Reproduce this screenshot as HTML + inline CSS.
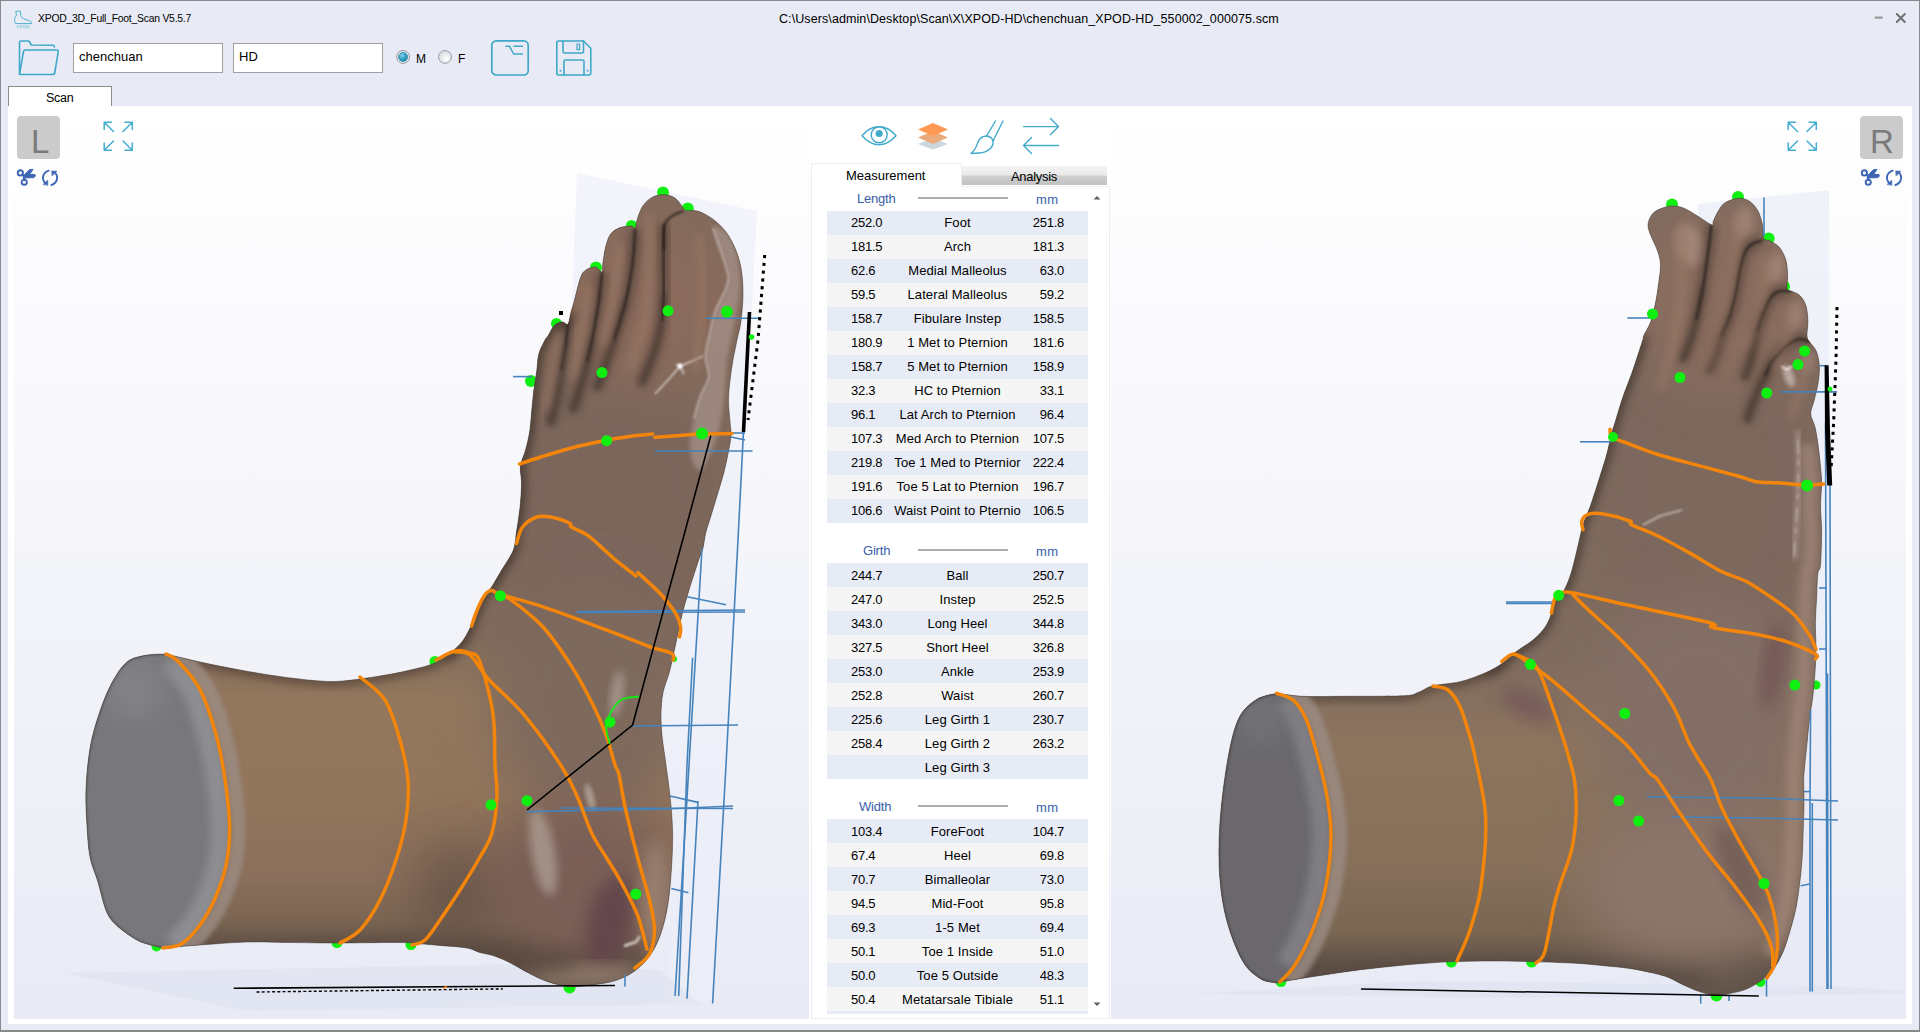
<!DOCTYPE html>
<html>
<head>
<meta charset="utf-8">
<title>XPOD_3D_Full_Foot_Scan</title>
<style>
*{box-sizing:border-box;margin:0;padding:0}
html,body{width:1920px;height:1032px;overflow:hidden;background:#e8ebf5;font-family:"Liberation Sans",sans-serif;color:#000}
#win{position:absolute;left:0;top:0;width:1920px;height:1032px;background:#e8ebf5;border-left:1px solid #8a8a8a;border-top:1px solid #8a8a8a;border-right:1px solid #8a8a8a;border-bottom:2px solid #8a8a8a}
.abs{position:absolute}
.t{position:absolute;white-space:nowrap;line-height:1}
#title{left:38px;top:14px;font-size:10.4px;letter-spacing:-0.24px}
#path{left:779px;top:13px;font-size:12.5px;letter-spacing:0.09px}
.inp{position:absolute;top:43px;height:30px;width:150px;background:#fff;border:1px solid #a0a0a0}
.inp span{position:absolute;left:5px;top:6px;font-size:13px;white-space:nowrap;line-height:1}
#tabscan{position:absolute;left:8px;top:86px;width:104px;height:21px;background:#fff;border:1px solid #8c8c8c;border-bottom:none}
#tabscan span{position:absolute;left:37px;top:5px;font-size:12.5px;line-height:1;letter-spacing:-0.3px}
#content{position:absolute;left:8px;top:106px;width:1904px;height:918px;background:#fff}
.vp{position:absolute;top:106px;height:913px;background:linear-gradient(180deg,#ffffff 0%,#fefeff 6%,#f4f5fa 50%,#e8ebf5 100%)}
#vpl{left:14px;width:795px}
#vpr{left:1111px;width:795px}
.lr{position:absolute;width:43px;height:43px;background:#cbcbcb;border-radius:4px;color:#7a7a7a;font-size:33px;line-height:1}
/* center panel */
#panel{position:absolute;left:811px;top:186px;width:299px;height:833px;border:1px solid #eceef3;background:#fff}
#tabm{position:absolute;left:811px;top:163px;width:151px;height:24px;background:#fff;border:1px solid #eceef3;border-bottom:none}
#taba{position:absolute;left:962px;top:166px;width:145px;height:19px;background:linear-gradient(180deg,#f4f4f4 0%,#eaeaea 45%,#cfcfcf 55%,#c2c2c2 100%)}
.row{position:absolute;left:827px;width:261px;height:24px;font-size:13px;line-height:26px;letter-spacing:-0.25px;overflow:hidden}
.row.a{background:#e7ebf6}
.row.b{background:#f5f5f5}
.row .l{position:absolute;left:24px;top:0;white-space:nowrap}
.row .c{position:absolute;left:0;width:261px;top:0;text-align:center;white-space:nowrap;letter-spacing:0.1px}
.row .r{position:absolute;right:24px;top:0;white-space:nowrap}
.hd{position:absolute;font-size:13px;line-height:1;color:#3a5ea8;white-space:nowrap;letter-spacing:-0.2px}
.hl{position:absolute;left:918px;width:90px;height:2px;background:#adadad}
</style>
</head>
<body>
<div id="win"></div>

<!-- title bar -->
<svg class="abs" style="left:12px;top:9px" width="22" height="22" viewBox="0 0 22 22" fill="none" stroke="#4ab0cf" stroke-width="1" stroke-linecap="round" stroke-linejoin="round">
<path d="M4.2 2.2 L8.4 2.2 L8.8 6.8 C10 9.5 13 10.5 16.5 11.5 C18.8 12.2 19.8 13.2 19.6 14.6 L3.6 14.6 C2.2 12 2 9 4.2 6.5 Z"/>
<path d="M4.5 16.5 L7 19 M7 16.5 L4.5 19 M8.5 19 L8.5 16.5 L10 16.5 L10 18 L8.5 18 M12 16.5 h2 v2.5 h-2 z M15.5 16.5 h1.5 v2.5 h-1.5 z" stroke-width="0.6" stroke="#7cc4dc"/>
</svg>
<div class="t" id="title">XPOD_3D_Full_Foot_Scan V5.5.7</div>
<div class="t" id="path">C:\Users\admin\Desktop\Scan\X\XPOD-HD\chenchuan_XPOD-HD_550002_000075.scm</div>
<svg class="abs" style="left:1868px;top:9px" width="44" height="20" viewBox="0 0 44 20" fill="none" stroke="#707070" stroke-width="2" stroke-linecap="round">
<path d="M7.6 8.6 L14 8.6" stroke="#9a9a9a" stroke-width="2.2"/>
<path d="M28.8 5 L36.8 13 M36.8 5 L28.8 13"/>
</svg>

<!-- toolbar -->
<svg class="abs" style="left:16px;top:38px" width="46" height="40" viewBox="0 0 46 40" fill="none" stroke="#3fa8c8" stroke-width="1.6" stroke-linejoin="round" stroke-linecap="round">
<path d="M3.5 36 L3.5 4.5 Q3.5 3 5 3 L12 3 Q13 3 13.6 4 L15.2 7 L37 7.3 Q38.3 7.4 38.5 9"/>
<path d="M3.5 36 L7.5 13.5 Q7.8 12 9.3 12 L40.5 12 Q42.5 12 42.2 14 L38.8 34.5 Q38.5 36.5 36.5 36.5 L5 36.5 Q3.6 36.5 3.5 36 Z"/>
</svg>
<div class="inp" style="left:73px"><span>chenchuan</span></div>
<div class="inp" style="left:233px"><span>HD</span></div>
<svg class="abs" style="left:394px;top:48px" width="64" height="18" viewBox="0 0 64 18">
<defs>
<radialGradient id="rgm" cx="0.4" cy="0.35" r="0.7"><stop offset="0" stop-color="#8fd4ea"/><stop offset="0.5" stop-color="#35a3c8"/><stop offset="1" stop-color="#1d7fa6"/></radialGradient>
<radialGradient id="rgf" cx="0.6" cy="0.65" r="0.7"><stop offset="0" stop-color="#ffffff"/><stop offset="1" stop-color="#d4d7dc"/></radialGradient>
</defs>
<circle cx="9.1" cy="8.9" r="6.4" fill="#f4f5f8" stroke="#7d8288" stroke-width="0.9"/>
<circle cx="9.1" cy="8.9" r="4.6" fill="url(#rgm)" stroke="#2a7d9e" stroke-width="0.6"/>
<circle cx="51" cy="8.9" r="6.4" fill="url(#rgf)" stroke="#8d9298" stroke-width="0.9"/>
</svg>
<div class="t" style="left:416px;top:53px;font-size:12px">M</div>
<div class="t" style="left:458px;top:53px;font-size:12px">F</div>
<svg class="abs" style="left:489px;top:38px" width="42" height="40" viewBox="0 0 42 40" fill="none" stroke="#3fa8c8" stroke-width="1.7" stroke-linecap="round" stroke-linejoin="round">
<rect x="2.8" y="2.8" width="36.4" height="34.2" rx="4.5"/>
<path d="M17 8.2 L20.5 8.2 L24.6 16 L33.5 16 M25 8.2 L33.5 8.2" stroke-width="1.5"/>
</svg>
<svg class="abs" style="left:554px;top:38px" width="42" height="40" viewBox="0 0 42 40" fill="none" stroke="#3fa8c8" stroke-width="1.6" stroke-linejoin="round" stroke-linecap="round">
<path d="M4.5 3 L29.5 3 L36.8 10.3 L36.8 35 Q36.8 37 34.8 37 L4.5 37 Q2.8 37 2.8 35 L2.8 4.7 Q2.8 3 4.5 3 Z"/>
<path d="M9 3 L9 13.5 Q9 15 10.5 15 L28 15 Q29.5 15 29.5 13.5 L29.5 3"/>
<rect x="23" y="6" width="2.6" height="5.6" stroke-width="1.2"/>
<path d="M10 37 L10 23.5 Q10 22 11.5 22 L28.5 22 Q30 22 30 23.5 L30 37"/>
<circle cx="6.3" cy="32.8" r="0.5" stroke-width="1"/><circle cx="33.5" cy="32.8" r="0.5" stroke-width="1"/>
</svg>
<div id="tabscan"><span>Scan</span></div>

<!-- content -->
<div id="content"></div>
<div class="vp" id="vpl"></div>
<div class="vp" id="vpr"></div>

<svg class="abs" style="left:0;top:0" width="1920" height="1032" viewBox="0 0 1920 1032">
<defs>
<clipPath id="cvl"><rect x="14" y="106" width="795" height="913"/></clipPath>
<clipPath id="cvr"><rect x="1111" y="106" width="795" height="913"/></clipPath>
<filter id="b2" x="-20%" y="-20%" width="140%" height="140%"><feGaussianBlur stdDeviation="2"/></filter>
<filter id="b1" x="-20%" y="-20%" width="140%" height="140%"><feGaussianBlur stdDeviation="1"/></filter>
<filter id="b4" x="-30%" y="-30%" width="160%" height="160%"><feGaussianBlur stdDeviation="4"/></filter>
<filter id="b8" x="-30%" y="-30%" width="160%" height="160%"><feGaussianBlur stdDeviation="8"/></filter>
<filter id="b14" x="-40%" y="-40%" width="180%" height="180%"><feGaussianBlur stdDeviation="14"/></filter>
<filter id="b25" x="-50%" y="-50%" width="200%" height="200%"><feGaussianBlur stdDeviation="25"/></filter>
</defs>
<clipPath id="cfl"><path d="M166.0 654.0 C171.7 655.3 187.7 659.3 200.0 662.0 C212.3 664.7 226.2 667.5 240.0 670.0 C253.8 672.5 269.7 675.2 283.0 677.0 C296.3 678.8 310.0 680.3 320.0 681.0 C330.0 681.7 333.0 681.8 343.0 681.0 C353.0 680.2 369.5 677.7 380.0 676.0 C390.5 674.3 397.6 672.9 406.0 671.0 C414.4 669.1 424.1 667.0 430.6 664.7 C437.1 662.4 440.9 659.6 445.0 657.0 C449.1 654.4 451.9 651.9 455.0 649.0 C458.1 646.1 460.9 643.5 463.7 639.4 C466.5 635.3 468.7 631.0 471.6 624.6 C474.5 618.2 478.5 606.4 481.0 601.0 C483.5 595.6 484.6 594.6 486.4 592.3 C488.2 590.0 489.0 590.8 491.6 587.0 C494.2 583.2 498.5 575.4 502.0 569.6 C505.5 563.8 510.3 556.9 512.6 552.0 C514.9 547.1 515.0 542.8 515.6 540.0 C516.2 537.2 515.5 538.5 516.0 535.0 C516.5 531.5 517.8 524.4 518.5 519.0 C519.2 513.6 520.0 508.9 520.5 502.8 C521.0 496.7 521.5 488.6 521.5 482.5 C521.5 476.4 519.8 471.4 520.5 466.0 C521.2 460.6 524.1 455.7 525.6 450.0 C527.1 444.3 528.7 438.1 529.7 431.6 C530.7 425.1 531.0 417.8 531.7 411.0 C532.4 404.2 532.9 397.8 533.7 391.0 C534.6 384.2 535.9 376.7 536.8 370.5 C537.6 364.3 537.4 359.1 538.8 354.0 C540.2 348.9 543.5 343.0 545.0 340.0 C546.5 337.0 546.7 338.2 548.0 336.0 C549.3 333.8 551.4 329.2 553.0 327.0 C554.6 324.8 556.1 323.8 557.8 323.0 C559.5 322.2 561.3 321.8 563.0 322.0 C564.7 322.2 566.7 325.7 568.0 324.0 C569.3 322.3 570.0 315.7 571.0 312.0 C572.0 308.3 572.4 307.7 574.0 302.0 C575.6 296.3 578.5 283.0 580.5 277.7 C582.5 272.4 583.5 271.8 586.0 270.0 C588.5 268.2 592.9 266.7 595.6 267.0 C598.3 267.3 600.8 272.8 602.0 272.0 C603.2 271.2 602.3 266.4 603.0 262.0 C603.7 257.6 604.7 250.3 606.0 245.6 C607.3 240.9 608.4 237.0 610.7 234.0 C613.0 231.0 616.5 228.9 620.0 227.6 C623.5 226.3 629.0 225.8 631.5 226.0 C634.0 226.2 634.2 229.3 635.0 228.6 C635.8 227.9 636.0 223.9 636.5 222.0 C637.0 220.1 637.0 219.7 638.0 217.0 C639.0 214.3 640.5 209.3 642.8 206.0 C645.1 202.7 648.5 199.3 652.0 197.4 C655.5 195.5 659.8 194.5 663.6 194.6 C667.4 194.7 671.9 196.0 675.0 198.0 C678.1 200.0 680.7 204.7 682.5 206.8 C684.3 208.9 683.5 209.8 686.0 210.5 C688.5 211.2 693.1 209.6 697.6 211.0 C702.1 212.4 708.0 215.5 712.7 219.0 C717.4 222.5 722.2 227.0 726.0 232.0 C729.8 237.0 732.9 243.0 735.4 249.0 C737.9 255.0 739.7 260.7 741.0 268.0 C742.3 275.3 743.0 284.0 743.0 292.8 C743.0 301.6 742.0 313.1 741.0 321.0 C740.0 328.9 738.3 333.5 737.0 340.0 C735.7 346.5 734.2 353.2 733.0 360.0 C731.8 366.8 730.8 373.9 730.0 380.7 C729.2 387.5 728.5 394.2 728.5 401.0 C728.5 407.8 729.6 415.6 730.0 421.4 C730.4 427.2 731.3 430.2 731.0 435.6 C730.7 441.0 729.2 447.9 728.0 454.0 C726.8 460.1 725.7 465.6 724.0 472.0 C722.3 478.4 720.0 485.8 718.0 492.6 C716.0 499.4 713.8 506.3 711.8 513.0 C709.8 519.7 707.2 527.2 705.7 533.0 C704.2 538.8 704.3 543.2 703.0 548.0 C701.7 552.8 700.3 555.0 698.0 562.0 C695.7 569.0 691.7 581.0 689.0 590.0 C686.3 599.0 683.9 607.2 681.7 616.0 C679.5 624.8 678.0 633.4 676.0 642.5 C674.0 651.6 671.9 662.4 669.7 670.8 C667.5 679.1 664.5 685.4 663.0 692.6 C661.5 699.8 661.2 706.8 661.0 714.0 C660.8 721.2 661.3 728.7 662.0 736.0 C662.7 743.3 663.7 748.0 665.0 758.0 C666.3 768.0 668.7 783.5 670.0 796.0 C671.3 808.5 672.4 820.5 672.6 832.7 C672.8 844.9 672.2 857.0 671.4 869.0 C670.6 881.0 669.6 894.1 667.8 905.0 C666.0 915.9 663.5 926.0 660.5 934.5 C657.5 943.0 653.9 950.0 649.6 956.0 C645.4 962.0 640.6 966.7 635.0 970.8 C629.4 974.9 623.0 978.1 615.7 980.5 C608.5 982.9 599.2 984.0 591.5 985.0 C583.8 986.0 576.9 987.0 569.6 986.5 C562.3 986.0 554.6 984.0 547.8 981.7 C540.9 979.5 534.5 976.0 528.5 973.0 C522.5 970.0 517.2 966.3 511.5 963.5 C505.8 960.7 499.8 957.8 494.5 956.0 C489.2 954.2 484.6 953.9 480.0 952.6 C475.4 951.3 473.7 949.2 467.0 948.0 C460.3 946.8 447.5 946.2 440.0 945.5 C432.5 944.8 428.7 944.5 422.0 944.0 C415.3 943.5 414.0 942.7 400.0 942.5 C386.0 942.3 356.3 943.0 338.0 943.0 C319.7 943.0 305.2 942.7 290.0 942.5 C274.8 942.3 262.0 941.6 247.0 942.0 C232.0 942.4 214.0 944.0 200.0 945.0 C186.0 946.0 169.2 947.5 163.0 948.0 C160.9 947.5 154.8 946.2 150.6 945.0 C146.4 943.8 143.2 943.4 138.0 940.6 C132.8 937.8 124.8 932.6 119.6 928.0 C114.4 923.4 110.6 920.4 107.0 912.7 C103.4 905.0 100.7 891.0 97.9 881.7 C95.1 872.4 91.8 866.3 90.0 857.0 C88.2 847.7 87.7 837.4 87.0 826.0 C86.3 814.6 85.5 801.6 86.0 788.7 C86.5 775.8 88.0 760.4 90.0 748.5 C92.0 736.6 94.6 727.8 97.9 717.5 C101.2 707.2 105.3 695.6 110.0 686.5 C114.7 677.4 120.1 668.2 125.8 663.0 C131.5 657.8 137.7 657.0 144.4 655.5 C151.1 654.0 162.4 654.2 166.0 654.0 Z"/></clipPath>
<clipPath id="ccl"><path d="M166.0 654.0 C168.1 655.3 172.8 655.8 178.5 661.7 C184.2 667.6 193.8 677.7 200.0 689.6 C206.2 701.5 211.4 718.0 215.6 733.0 C219.8 748.0 222.7 764.0 225.0 779.5 C227.3 795.0 229.3 812.1 229.6 826.0 C229.8 839.9 228.8 851.2 226.5 863.0 C224.2 874.8 220.0 886.7 215.6 897.0 C211.2 907.3 205.7 917.2 200.0 925.0 C194.3 932.8 187.8 939.9 181.6 943.7 C175.4 947.5 166.1 947.3 163.0 948.0 C160.9 947.5 154.8 946.2 150.6 945.0 C146.4 943.8 143.2 943.4 138.0 940.6 C132.8 937.8 124.8 932.6 119.6 928.0 C114.4 923.4 110.6 920.4 107.0 912.7 C103.4 905.0 100.7 891.0 97.9 881.7 C95.1 872.4 91.8 866.3 90.0 857.0 C88.2 847.7 87.7 837.4 87.0 826.0 C86.3 814.6 85.5 801.6 86.0 788.7 C86.5 775.8 88.0 760.4 90.0 748.5 C92.0 736.6 94.6 727.8 97.9 717.5 C101.2 707.2 105.3 695.6 110.0 686.5 C114.7 677.4 120.1 668.2 125.8 663.0 C131.5 657.8 137.7 657.0 144.4 655.5 C151.1 654.0 162.4 654.2 166.0 654.0 Z"/></clipPath>
<linearGradient id="gLbase" gradientUnits="userSpaceOnUse" x1="0" y1="640" x2="0" y2="990">
<stop offset="0" stop-color="#806a5b"/><stop offset="0.17" stop-color="#93775d"/><stop offset="0.45" stop-color="#92755b"/><stop offset="0.68" stop-color="#8a6f5b"/><stop offset="0.8" stop-color="#7b6552"/><stop offset="0.88" stop-color="#5f5045"/><stop offset="1" stop-color="#5f5045"/></linearGradient>
<g clip-path="url(#cvl)">
<path d="M577 173 L757 211 L745 431 L738 540 L726 765 L713 1003 L670 1003 L640 420 L571 330 Z" fill="#eceef9" opacity="0.6"/>
<path d="M64 973 L520 964 L660 970 L700 1004 L246 1011 Z" fill="#dde1ef" opacity="0.55"/>
<circle cx="663" cy="192.5" r="6" fill="#10f010"/>
<circle cx="687.8" cy="208.5" r="6" fill="#10f010"/>
<circle cx="631.5" cy="225.5" r="5.5" fill="#10f010"/>
<circle cx="596" cy="267.5" r="6" fill="#10f010"/>
<circle cx="556.5" cy="323.5" r="5.5" fill="#10f010"/>
<circle cx="531" cy="381" r="6" fill="#10f010"/>
<circle cx="435" cy="661.5" r="5.5" fill="#10f010"/>
<circle cx="569.6" cy="987.5" r="6" fill="#10f010"/>
<circle cx="156.5" cy="946.5" r="5" fill="#10f010"/>
<circle cx="337" cy="942.5" r="5.5" fill="#10f010"/>
<circle cx="411" cy="944.5" r="5.5" fill="#10f010"/>
<circle cx="674" cy="659" r="3" fill="#10f010"/>
<path d="M166.0 654.0 C171.7 655.3 187.7 659.3 200.0 662.0 C212.3 664.7 226.2 667.5 240.0 670.0 C253.8 672.5 269.7 675.2 283.0 677.0 C296.3 678.8 310.0 680.3 320.0 681.0 C330.0 681.7 333.0 681.8 343.0 681.0 C353.0 680.2 369.5 677.7 380.0 676.0 C390.5 674.3 397.6 672.9 406.0 671.0 C414.4 669.1 424.1 667.0 430.6 664.7 C437.1 662.4 440.9 659.6 445.0 657.0 C449.1 654.4 451.9 651.9 455.0 649.0 C458.1 646.1 460.9 643.5 463.7 639.4 C466.5 635.3 468.7 631.0 471.6 624.6 C474.5 618.2 478.5 606.4 481.0 601.0 C483.5 595.6 484.6 594.6 486.4 592.3 C488.2 590.0 489.0 590.8 491.6 587.0 C494.2 583.2 498.5 575.4 502.0 569.6 C505.5 563.8 510.3 556.9 512.6 552.0 C514.9 547.1 515.0 542.8 515.6 540.0 C516.2 537.2 515.5 538.5 516.0 535.0 C516.5 531.5 517.8 524.4 518.5 519.0 C519.2 513.6 520.0 508.9 520.5 502.8 C521.0 496.7 521.5 488.6 521.5 482.5 C521.5 476.4 519.8 471.4 520.5 466.0 C521.2 460.6 524.1 455.7 525.6 450.0 C527.1 444.3 528.7 438.1 529.7 431.6 C530.7 425.1 531.0 417.8 531.7 411.0 C532.4 404.2 532.9 397.8 533.7 391.0 C534.6 384.2 535.9 376.7 536.8 370.5 C537.6 364.3 537.4 359.1 538.8 354.0 C540.2 348.9 543.5 343.0 545.0 340.0 C546.5 337.0 546.7 338.2 548.0 336.0 C549.3 333.8 551.4 329.2 553.0 327.0 C554.6 324.8 556.1 323.8 557.8 323.0 C559.5 322.2 561.3 321.8 563.0 322.0 C564.7 322.2 566.7 325.7 568.0 324.0 C569.3 322.3 570.0 315.7 571.0 312.0 C572.0 308.3 572.4 307.7 574.0 302.0 C575.6 296.3 578.5 283.0 580.5 277.7 C582.5 272.4 583.5 271.8 586.0 270.0 C588.5 268.2 592.9 266.7 595.6 267.0 C598.3 267.3 600.8 272.8 602.0 272.0 C603.2 271.2 602.3 266.4 603.0 262.0 C603.7 257.6 604.7 250.3 606.0 245.6 C607.3 240.9 608.4 237.0 610.7 234.0 C613.0 231.0 616.5 228.9 620.0 227.6 C623.5 226.3 629.0 225.8 631.5 226.0 C634.0 226.2 634.2 229.3 635.0 228.6 C635.8 227.9 636.0 223.9 636.5 222.0 C637.0 220.1 637.0 219.7 638.0 217.0 C639.0 214.3 640.5 209.3 642.8 206.0 C645.1 202.7 648.5 199.3 652.0 197.4 C655.5 195.5 659.8 194.5 663.6 194.6 C667.4 194.7 671.9 196.0 675.0 198.0 C678.1 200.0 680.7 204.7 682.5 206.8 C684.3 208.9 683.5 209.8 686.0 210.5 C688.5 211.2 693.1 209.6 697.6 211.0 C702.1 212.4 708.0 215.5 712.7 219.0 C717.4 222.5 722.2 227.0 726.0 232.0 C729.8 237.0 732.9 243.0 735.4 249.0 C737.9 255.0 739.7 260.7 741.0 268.0 C742.3 275.3 743.0 284.0 743.0 292.8 C743.0 301.6 742.0 313.1 741.0 321.0 C740.0 328.9 738.3 333.5 737.0 340.0 C735.7 346.5 734.2 353.2 733.0 360.0 C731.8 366.8 730.8 373.9 730.0 380.7 C729.2 387.5 728.5 394.2 728.5 401.0 C728.5 407.8 729.6 415.6 730.0 421.4 C730.4 427.2 731.3 430.2 731.0 435.6 C730.7 441.0 729.2 447.9 728.0 454.0 C726.8 460.1 725.7 465.6 724.0 472.0 C722.3 478.4 720.0 485.8 718.0 492.6 C716.0 499.4 713.8 506.3 711.8 513.0 C709.8 519.7 707.2 527.2 705.7 533.0 C704.2 538.8 704.3 543.2 703.0 548.0 C701.7 552.8 700.3 555.0 698.0 562.0 C695.7 569.0 691.7 581.0 689.0 590.0 C686.3 599.0 683.9 607.2 681.7 616.0 C679.5 624.8 678.0 633.4 676.0 642.5 C674.0 651.6 671.9 662.4 669.7 670.8 C667.5 679.1 664.5 685.4 663.0 692.6 C661.5 699.8 661.2 706.8 661.0 714.0 C660.8 721.2 661.3 728.7 662.0 736.0 C662.7 743.3 663.7 748.0 665.0 758.0 C666.3 768.0 668.7 783.5 670.0 796.0 C671.3 808.5 672.4 820.5 672.6 832.7 C672.8 844.9 672.2 857.0 671.4 869.0 C670.6 881.0 669.6 894.1 667.8 905.0 C666.0 915.9 663.5 926.0 660.5 934.5 C657.5 943.0 653.9 950.0 649.6 956.0 C645.4 962.0 640.6 966.7 635.0 970.8 C629.4 974.9 623.0 978.1 615.7 980.5 C608.5 982.9 599.2 984.0 591.5 985.0 C583.8 986.0 576.9 987.0 569.6 986.5 C562.3 986.0 554.6 984.0 547.8 981.7 C540.9 979.5 534.5 976.0 528.5 973.0 C522.5 970.0 517.2 966.3 511.5 963.5 C505.8 960.7 499.8 957.8 494.5 956.0 C489.2 954.2 484.6 953.9 480.0 952.6 C475.4 951.3 473.7 949.2 467.0 948.0 C460.3 946.8 447.5 946.2 440.0 945.5 C432.5 944.8 428.7 944.5 422.0 944.0 C415.3 943.5 414.0 942.7 400.0 942.5 C386.0 942.3 356.3 943.0 338.0 943.0 C319.7 943.0 305.2 942.7 290.0 942.5 C274.8 942.3 262.0 941.6 247.0 942.0 C232.0 942.4 214.0 944.0 200.0 945.0 C186.0 946.0 169.2 947.5 163.0 948.0 C160.9 947.5 154.8 946.2 150.6 945.0 C146.4 943.8 143.2 943.4 138.0 940.6 C132.8 937.8 124.8 932.6 119.6 928.0 C114.4 923.4 110.6 920.4 107.0 912.7 C103.4 905.0 100.7 891.0 97.9 881.7 C95.1 872.4 91.8 866.3 90.0 857.0 C88.2 847.7 87.7 837.4 87.0 826.0 C86.3 814.6 85.5 801.6 86.0 788.7 C86.5 775.8 88.0 760.4 90.0 748.5 C92.0 736.6 94.6 727.8 97.9 717.5 C101.2 707.2 105.3 695.6 110.0 686.5 C114.7 677.4 120.1 668.2 125.8 663.0 C131.5 657.8 137.7 657.0 144.4 655.5 C151.1 654.0 162.4 654.2 166.0 654.0 Z" fill="url(#gLbase)"/>
<g clip-path="url(#cfl)">
<ellipse cx="610" cy="520" rx="120" ry="160" fill="#7b665b" filter="url(#b25)"/>
<ellipse cx="590" cy="700" rx="100" ry="120" fill="#7e695d" filter="url(#b25)"/>
<ellipse cx="640" cy="300" rx="95" ry="85" fill="#8a6b5b" filter="url(#b25)"/>
<ellipse cx="580" cy="880" rx="90" ry="80" fill="#7a5f56" filter="url(#b25)"/>
<ellipse cx="610" cy="922" rx="22" ry="46" transform="rotate(12 610 922)" fill="#62454b" filter="url(#b8)" opacity="0.9"/>
<ellipse cx="543" cy="852" rx="12" ry="44" transform="rotate(-10 543 852)" fill="#ab9b91" filter="url(#b4)" opacity="0.8"/>
<ellipse cx="590" cy="797" rx="4" ry="14" transform="rotate(-15 590 797)" fill="#b5a79e" filter="url(#b2)" opacity="0.8"/>
<path d="M624 946 L636 942 L640 936" fill="none" stroke="#d8ccc6" stroke-width="3" filter="url(#b1)" opacity="0.9"/>
<ellipse cx="655" cy="900" rx="14" ry="60" fill="#9c8271" filter="url(#b8)" opacity="0.9"/>
<ellipse cx="585" cy="975" rx="60" ry="10" fill="#9a8474" filter="url(#b8)" opacity="0.8"/>
<ellipse cx="380" cy="962" rx="200" ry="18" fill="#5a4a40" filter="url(#b8)" opacity="0.7"/>
<ellipse cx="455" cy="890" rx="40" ry="50" fill="#5f4e44" filter="url(#b25)" opacity="0.7"/>
<path d="M445.0 657.0 C446.7 655.7 451.9 651.9 455.0 649.0 C458.1 646.1 460.9 643.5 463.7 639.4 C466.5 635.3 468.7 631.0 471.6 624.6 C474.5 618.2 478.5 606.4 481.0 601.0 C483.5 595.6 484.6 594.6 486.4 592.3 C488.2 590.0 489.0 590.8 491.6 587.0 C494.2 583.2 498.5 575.4 502.0 569.6 C505.5 563.8 510.3 556.9 512.6 552.0 C514.9 547.1 515.0 542.8 515.6 540.0 C516.2 537.2 515.5 538.5 516.0 535.0 C516.5 531.5 517.8 524.4 518.5 519.0 C519.2 513.6 520.0 508.9 520.5 502.8 C521.0 496.7 521.5 488.6 521.5 482.5 C521.5 476.4 519.8 471.4 520.5 466.0 C521.2 460.6 524.1 455.7 525.6 450.0 C527.1 444.3 528.7 438.1 529.7 431.6 C530.7 425.1 531.0 417.8 531.7 411.0 C532.4 404.2 532.9 397.8 533.7 391.0 C534.6 384.2 535.9 376.7 536.8 370.5 C537.6 364.3 537.4 359.1 538.8 354.0 C540.2 348.9 543.5 343.0 545.0 340.0 C546.5 337.0 546.7 338.2 548.0 336.0 C549.3 333.8 551.4 329.2 553.0 327.0 C554.6 324.8 556.1 323.8 557.8 323.0 C559.5 322.2 561.3 321.8 563.0 322.0 C564.7 322.2 566.7 325.7 568.0 324.0 C569.3 322.3 570.5 314.0 571.0 312.0" fill="none" stroke="#3d332c" stroke-width="9" filter="url(#b4)" opacity="0.8"/>
<path d="M166.0 654.0 C171.7 655.3 187.7 659.3 200.0 662.0 C212.3 664.7 226.2 667.5 240.0 670.0 C253.8 672.5 269.7 675.2 283.0 677.0 C296.3 678.8 310.0 680.3 320.0 681.0 C330.0 681.7 333.0 681.8 343.0 681.0 C353.0 680.2 369.5 677.7 380.0 676.0 C390.5 674.3 397.6 672.9 406.0 671.0 C414.4 669.1 424.1 667.0 430.6 664.7 C437.1 662.4 440.9 659.6 445.0 657.0 C449.1 654.4 453.3 650.3 455.0 649.0" fill="none" stroke="#46392f" stroke-width="10" filter="url(#b4)" opacity="0.6"/>
<path d="M713.0 228.0 C713.0 233.6 723.2 256.3 725.7 265.5 C728.2 274.7 729.7 275.4 728.0 283.0 C726.3 290.6 718.5 303.0 715.6 311.0 C712.7 319.0 712.3 323.5 710.6 331.0 C708.9 338.5 705.8 348.4 705.5 356.0 C705.2 363.6 709.8 369.7 709.0 376.5 C708.2 383.3 703.0 389.5 700.5 396.6 C698.0 403.7 695.8 410.1 694.0 419.0 C692.2 427.9 689.0 441.5 690.0 450.0 C691.0 458.5 695.7 471.7 700.0 470.0 C704.3 468.3 712.0 451.7 716.0 440.0 C720.0 428.3 722.2 413.3 724.0 400.0 C725.8 386.7 725.2 373.3 727.0 360.0 C728.8 346.7 732.8 332.5 735.0 320.0 C737.2 307.5 739.8 296.7 740.0 285.0 C740.2 273.3 738.3 258.8 736.0 250.0 C733.7 241.2 729.8 235.7 726.0 232.0 C722.2 228.3 713.0 222.4 713.0 228.0 Z" fill="#a38f87" filter="url(#b2)" opacity="0.8"/>
<path d="M713.0 228.0 C715.1 234.2 723.2 256.3 725.7 265.5 C728.2 274.7 729.7 275.4 728.0 283.0 C726.3 290.6 718.5 303.0 715.6 311.0 C712.7 319.0 712.3 323.5 710.6 331.0 C708.9 338.5 705.8 348.4 705.5 356.0 C705.2 363.6 709.8 369.7 709.0 376.5 C708.2 383.3 703.0 389.5 700.5 396.6 C698.0 403.7 695.1 415.3 694.0 419.0" fill="none" stroke="#d2c5c1" stroke-width="2" filter="url(#b1)" opacity="0.6"/>
<path d="M703 356 L690 362 L680 366.4 L676 364 M680 366.4 L684 374 M680 366.4 L668 380 L655 394" fill="none" stroke="#e9e1e1" stroke-width="1.8" filter="url(#b1)" opacity="0.75"/>
<circle cx="680" cy="366" r="2.5" fill="#ffffff" filter="url(#b1)"/>
<ellipse cx="617" cy="694" rx="6" ry="24" transform="rotate(8 617 694)" fill="#aa9c92" filter="url(#b4)" opacity="0.85"/>
<path d="M568.0 324.0 C567.7 326.7 567.2 332.3 566.0 340.0 C564.8 347.7 562.7 359.8 561.0 370.0 C559.3 380.2 557.8 391.8 556.0 401.0 C554.2 410.2 551.0 421.0 550.0 425.0" fill="none" stroke="#453830" stroke-width="11" filter="url(#b4)" opacity="0.6"/>
<path d="M602.0 272.0 C601.5 276.7 600.7 288.7 599.0 300.0 C597.3 311.3 594.0 329.7 592.0 340.0 C590.0 350.3 589.3 352.8 587.0 362.0 C584.7 371.2 580.5 386.7 578.0 395.0 C575.5 403.3 573.0 409.2 572.0 412.0" fill="none" stroke="#453830" stroke-width="11" filter="url(#b4)" opacity="0.6"/>
<path d="M635.0 229.0 C634.7 234.2 634.5 248.2 633.0 260.0 C631.5 271.8 629.2 286.7 626.0 300.0 C622.8 313.3 618.0 327.5 614.0 340.0 C610.0 352.5 605.0 366.7 602.0 375.0 C599.0 383.3 597.0 387.5 596.0 390.0" fill="none" stroke="#453830" stroke-width="11" filter="url(#b4)" opacity="0.6"/>
<path d="M664.0 224.0 C663.9 230.7 663.6 252.5 663.6 264.0 C663.6 275.5 664.3 283.5 664.0 293.0 C663.7 302.5 663.2 311.5 661.7 321.0 C660.2 330.5 658.5 339.3 655.0 350.0 C651.5 360.7 643.3 379.2 641.0 385.0" fill="none" stroke="#453830" stroke-width="11" filter="url(#b4)" opacity="0.6"/>
<path d="M568.0 324.0 C567.7 326.7 567.2 332.3 566.0 340.0 C564.8 347.7 561.8 365.0 561.0 370.0" fill="none" stroke="#2c231e" stroke-width="2.2" filter="url(#b1)" opacity="0.95"/>
<path d="M566.0 340.0 C565.2 345.0 562.7 359.8 561.0 370.0 C559.3 380.2 557.8 391.8 556.0 401.0 C554.2 410.2 551.0 421.0 550.0 425.0" fill="none" stroke="#43362f" stroke-width="4" filter="url(#b2)" opacity="0.6"/>
<path d="M602.0 272.0 C601.5 276.7 600.7 288.7 599.0 300.0 C597.3 311.3 594.0 329.7 592.0 340.0 C590.0 350.3 587.8 358.3 587.0 362.0" fill="none" stroke="#2c231e" stroke-width="2.2" filter="url(#b1)" opacity="0.95"/>
<path d="M592.0 340.0 C591.2 343.7 589.3 352.8 587.0 362.0 C584.7 371.2 580.5 386.7 578.0 395.0 C575.5 403.3 573.0 409.2 572.0 412.0" fill="none" stroke="#43362f" stroke-width="4" filter="url(#b2)" opacity="0.6"/>
<path d="M635.0 229.0 C634.7 234.2 634.5 248.2 633.0 260.0 C631.5 271.8 629.2 286.7 626.0 300.0 C622.8 313.3 616.0 333.3 614.0 340.0" fill="none" stroke="#2c231e" stroke-width="2.2" filter="url(#b1)" opacity="0.95"/>
<path d="M626.0 300.0 C624.0 306.7 618.0 327.5 614.0 340.0 C610.0 352.5 605.0 366.7 602.0 375.0 C599.0 383.3 597.0 387.5 596.0 390.0" fill="none" stroke="#43362f" stroke-width="4" filter="url(#b2)" opacity="0.6"/>
<path d="M664.0 224.0 C663.9 230.7 663.6 252.5 663.6 264.0 C663.6 275.5 664.3 283.5 664.0 293.0 C663.7 302.5 662.1 316.3 661.7 321.0" fill="none" stroke="#2c231e" stroke-width="2.2" filter="url(#b1)" opacity="0.95"/>
<path d="M664.0 293.0 C663.6 297.7 663.2 311.5 661.7 321.0 C660.2 330.5 658.5 339.3 655.0 350.0 C651.5 360.7 643.3 379.2 641.0 385.0" fill="none" stroke="#43362f" stroke-width="4" filter="url(#b2)" opacity="0.6"/>
<path d="M664.0 250.0 C664.0 247.0 663.7 236.7 664.0 232.0 C664.3 227.3 664.7 224.7 666.0 222.0 C667.3 219.3 669.2 217.8 672.0 216.0 C674.8 214.2 681.2 211.8 683.0 211.0" fill="none" stroke="#2c231e" stroke-width="2" filter="url(#b1)" opacity="0.9"/>
<path d="M560.0 335.0 C559.0 340.8 556.5 357.5 554.0 370.0 C551.5 382.5 546.5 403.3 545.0 410.0" fill="none" stroke="#9d7c69" stroke-width="7" filter="url(#b4)" opacity="0.7"/>
<path d="M590.0 285.0 C588.8 292.5 586.0 314.2 583.0 330.0 C580.0 345.8 573.8 371.7 572.0 380.0" fill="none" stroke="#9d7c69" stroke-width="7" filter="url(#b4)" opacity="0.7"/>
<path d="M620.0 245.0 C619.2 252.5 617.8 273.3 615.0 290.0 C612.2 306.7 605.0 335.8 603.0 345.0" fill="none" stroke="#9d7c69" stroke-width="7" filter="url(#b4)" opacity="0.7"/>
<path d="M650.0 215.0 C650.0 222.5 650.8 242.5 650.0 260.0 C649.2 277.5 648.3 301.7 645.0 320.0 C641.7 338.3 632.5 361.7 630.0 370.0" fill="none" stroke="#9d7c69" stroke-width="7" filter="url(#b4)" opacity="0.7"/>
<path d="M700.0 235.0 C700.5 245.8 703.8 277.5 703.0 300.0 C702.2 322.5 696.3 358.3 695.0 370.0" fill="none" stroke="#9d7c69" stroke-width="7" filter="url(#b4)" opacity="0.7"/>
<path d="M175.0 654.0 C177.1 655.3 181.8 655.8 187.5 661.7 C193.2 667.6 202.8 677.7 209.0 689.6 C215.2 701.5 220.4 718.0 224.6 733.0 C228.8 748.0 231.7 764.0 234.0 779.5 C236.3 795.0 238.3 812.1 238.6 826.0 C238.8 839.9 237.8 851.2 235.5 863.0 C233.2 874.8 229.0 886.7 224.6 897.0 C220.2 907.3 214.7 917.2 209.0 925.0 C203.3 932.8 196.8 939.9 190.6 943.7 C184.4 947.5 175.1 947.3 172.0 948.0" fill="none" stroke="#9b8c84" stroke-width="14" filter="url(#b2)" opacity="0.8"/>
</g>
<path d="M166.0 654.0 C168.1 655.3 172.8 655.8 178.5 661.7 C184.2 667.6 193.8 677.7 200.0 689.6 C206.2 701.5 211.4 718.0 215.6 733.0 C219.8 748.0 222.7 764.0 225.0 779.5 C227.3 795.0 229.3 812.1 229.6 826.0 C229.8 839.9 228.8 851.2 226.5 863.0 C224.2 874.8 220.0 886.7 215.6 897.0 C211.2 907.3 205.7 917.2 200.0 925.0 C194.3 932.8 187.8 939.9 181.6 943.7 C175.4 947.5 166.1 947.3 163.0 948.0 C160.9 947.5 154.8 946.2 150.6 945.0 C146.4 943.8 143.2 943.4 138.0 940.6 C132.8 937.8 124.8 932.6 119.6 928.0 C114.4 923.4 110.6 920.4 107.0 912.7 C103.4 905.0 100.7 891.0 97.9 881.7 C95.1 872.4 91.8 866.3 90.0 857.0 C88.2 847.7 87.7 837.4 87.0 826.0 C86.3 814.6 85.5 801.6 86.0 788.7 C86.5 775.8 88.0 760.4 90.0 748.5 C92.0 736.6 94.6 727.8 97.9 717.5 C101.2 707.2 105.3 695.6 110.0 686.5 C114.7 677.4 120.1 668.2 125.8 663.0 C131.5 657.8 137.7 657.0 144.4 655.5 C151.1 654.0 162.4 654.2 166.0 654.0 Z" fill="#78787c"/>
<g clip-path="url(#ccl)">
<path d="M169.5 661.7 C173.1 666.4 184.8 677.7 191.0 689.6 C197.2 701.5 202.4 718.0 206.6 733.0 C210.8 748.0 213.7 764.0 216.0 779.5 C218.3 795.0 220.3 812.1 220.6 826.0 C220.8 839.9 219.8 851.2 217.5 863.0 C215.2 874.8 211.0 886.7 206.6 897.0 C202.2 907.3 196.7 917.2 191.0 925.0 C185.3 932.8 175.7 940.6 172.6 943.7" fill="none" stroke="#929296" stroke-width="20" filter="url(#b4)" opacity="0.85"/>
<ellipse cx="135" cy="690" rx="30" ry="30" fill="#88888c" filter="url(#b14)" opacity="0.7"/>
<path d="M163.0 948.0 C160.9 947.5 154.8 946.2 150.6 945.0 C146.4 943.8 143.2 943.4 138.0 940.6 C132.8 937.8 124.8 932.6 119.6 928.0 C114.4 923.4 110.6 920.4 107.0 912.7 C103.4 905.0 100.7 891.0 97.9 881.7 C95.1 872.4 91.8 866.3 90.0 857.0 C88.2 847.7 87.7 837.4 87.0 826.0 C86.3 814.6 85.5 801.6 86.0 788.7 C86.5 775.8 88.0 760.4 90.0 748.5 C92.0 736.6 94.6 727.8 97.9 717.5 C101.2 707.2 105.3 695.6 110.0 686.5 C114.7 677.4 120.1 668.2 125.8 663.0 C131.5 657.8 137.7 657.0 144.4 655.5 C151.1 654.0 162.4 654.2 166.0 654.0" fill="none" stroke="#4f4f53" stroke-width="2" filter="url(#b1)" opacity="0.8"/>
</g>
<path d="M166.0 654.0 C171.7 655.3 187.7 659.3 200.0 662.0 C212.3 664.7 226.2 667.5 240.0 670.0 C253.8 672.5 269.7 675.2 283.0 677.0 C296.3 678.8 310.0 680.3 320.0 681.0 C330.0 681.7 333.0 681.8 343.0 681.0 C353.0 680.2 369.5 677.7 380.0 676.0 C390.5 674.3 397.6 672.9 406.0 671.0 C414.4 669.1 424.1 667.0 430.6 664.7 C437.1 662.4 440.9 659.6 445.0 657.0 C449.1 654.4 451.9 651.9 455.0 649.0 C458.1 646.1 460.9 643.5 463.7 639.4 C466.5 635.3 468.7 631.0 471.6 624.6 C474.5 618.2 478.5 606.4 481.0 601.0 C483.5 595.6 484.6 594.6 486.4 592.3 C488.2 590.0 489.0 590.8 491.6 587.0 C494.2 583.2 498.5 575.4 502.0 569.6 C505.5 563.8 510.3 556.9 512.6 552.0 C514.9 547.1 515.0 542.8 515.6 540.0 C516.2 537.2 515.5 538.5 516.0 535.0 C516.5 531.5 517.8 524.4 518.5 519.0 C519.2 513.6 520.0 508.9 520.5 502.8 C521.0 496.7 521.5 488.6 521.5 482.5 C521.5 476.4 519.8 471.4 520.5 466.0 C521.2 460.6 524.1 455.7 525.6 450.0 C527.1 444.3 528.7 438.1 529.7 431.6 C530.7 425.1 531.0 417.8 531.7 411.0 C532.4 404.2 532.9 397.8 533.7 391.0 C534.6 384.2 535.9 376.7 536.8 370.5 C537.6 364.3 537.4 359.1 538.8 354.0 C540.2 348.9 543.5 343.0 545.0 340.0 C546.5 337.0 546.7 338.2 548.0 336.0 C549.3 333.8 551.4 329.2 553.0 327.0 C554.6 324.8 556.1 323.8 557.8 323.0 C559.5 322.2 561.3 321.8 563.0 322.0 C564.7 322.2 566.7 325.7 568.0 324.0 C569.3 322.3 570.0 315.7 571.0 312.0 C572.0 308.3 572.4 307.7 574.0 302.0 C575.6 296.3 578.5 283.0 580.5 277.7 C582.5 272.4 583.5 271.8 586.0 270.0 C588.5 268.2 592.9 266.7 595.6 267.0 C598.3 267.3 600.8 272.8 602.0 272.0 C603.2 271.2 602.3 266.4 603.0 262.0 C603.7 257.6 604.7 250.3 606.0 245.6 C607.3 240.9 608.4 237.0 610.7 234.0 C613.0 231.0 616.5 228.9 620.0 227.6 C623.5 226.3 629.0 225.8 631.5 226.0 C634.0 226.2 634.2 229.3 635.0 228.6 C635.8 227.9 636.0 223.9 636.5 222.0 C637.0 220.1 637.0 219.7 638.0 217.0 C639.0 214.3 640.5 209.3 642.8 206.0 C645.1 202.7 648.5 199.3 652.0 197.4 C655.5 195.5 659.8 194.5 663.6 194.6 C667.4 194.7 671.9 196.0 675.0 198.0 C678.1 200.0 680.7 204.7 682.5 206.8 C684.3 208.9 683.5 209.8 686.0 210.5 C688.5 211.2 693.1 209.6 697.6 211.0 C702.1 212.4 708.0 215.5 712.7 219.0 C717.4 222.5 722.2 227.0 726.0 232.0 C729.8 237.0 732.9 243.0 735.4 249.0 C737.9 255.0 739.7 260.7 741.0 268.0 C742.3 275.3 743.0 284.0 743.0 292.8 C743.0 301.6 742.0 313.1 741.0 321.0 C740.0 328.9 738.3 333.5 737.0 340.0 C735.7 346.5 734.2 353.2 733.0 360.0 C731.8 366.8 730.8 373.9 730.0 380.7 C729.2 387.5 728.5 394.2 728.5 401.0 C728.5 407.8 729.6 415.6 730.0 421.4 C730.4 427.2 731.3 430.2 731.0 435.6 C730.7 441.0 729.2 447.9 728.0 454.0 C726.8 460.1 725.7 465.6 724.0 472.0 C722.3 478.4 720.0 485.8 718.0 492.6 C716.0 499.4 713.8 506.3 711.8 513.0 C709.8 519.7 707.2 527.2 705.7 533.0 C704.2 538.8 704.3 543.2 703.0 548.0 C701.7 552.8 700.3 555.0 698.0 562.0 C695.7 569.0 691.7 581.0 689.0 590.0 C686.3 599.0 683.9 607.2 681.7 616.0 C679.5 624.8 678.0 633.4 676.0 642.5 C674.0 651.6 671.9 662.4 669.7 670.8 C667.5 679.1 664.5 685.4 663.0 692.6 C661.5 699.8 661.2 706.8 661.0 714.0 C660.8 721.2 661.3 728.7 662.0 736.0 C662.7 743.3 663.7 748.0 665.0 758.0 C666.3 768.0 668.7 783.5 670.0 796.0 C671.3 808.5 672.4 820.5 672.6 832.7 C672.8 844.9 672.2 857.0 671.4 869.0 C670.6 881.0 669.6 894.1 667.8 905.0 C666.0 915.9 663.5 926.0 660.5 934.5 C657.5 943.0 653.9 950.0 649.6 956.0 C645.4 962.0 640.6 966.7 635.0 970.8 C629.4 974.9 623.0 978.1 615.7 980.5 C608.5 982.9 599.2 984.0 591.5 985.0 C583.8 986.0 576.9 987.0 569.6 986.5 C562.3 986.0 554.6 984.0 547.8 981.7 C540.9 979.5 534.5 976.0 528.5 973.0 C522.5 970.0 517.2 966.3 511.5 963.5 C505.8 960.7 499.8 957.8 494.5 956.0 C489.2 954.2 484.6 953.9 480.0 952.6 C475.4 951.3 473.7 949.2 467.0 948.0 C460.3 946.8 447.5 946.2 440.0 945.5 C432.5 944.8 428.7 944.5 422.0 944.0 C415.3 943.5 414.0 942.7 400.0 942.5 C386.0 942.3 356.3 943.0 338.0 943.0 C319.7 943.0 305.2 942.7 290.0 942.5 C274.8 942.3 262.0 941.6 247.0 942.0 C232.0 942.4 214.0 944.0 200.0 945.0 C186.0 946.0 169.2 947.5 163.0 948.0 C160.9 947.5 154.8 946.2 150.6 945.0 C146.4 943.8 143.2 943.4 138.0 940.6 C132.8 937.8 124.8 932.6 119.6 928.0 C114.4 923.4 110.6 920.4 107.0 912.7 C103.4 905.0 100.7 891.0 97.9 881.7 C95.1 872.4 91.8 866.3 90.0 857.0 C88.2 847.7 87.7 837.4 87.0 826.0 C86.3 814.6 85.5 801.6 86.0 788.7 C86.5 775.8 88.0 760.4 90.0 748.5 C92.0 736.6 94.6 727.8 97.9 717.5 C101.2 707.2 105.3 695.6 110.0 686.5 C114.7 677.4 120.1 668.2 125.8 663.0 C131.5 657.8 137.7 657.0 144.4 655.5 C151.1 654.0 162.4 654.2 166.0 654.0 Z" fill="none" stroke="#3b322c" stroke-width="0.8" opacity="0.6"/>
<path d="M513.0 376.6 L532.0 376.6" fill="none" stroke="#4583bd" stroke-width="1.6"/>
<path d="M706.0 318.3 L760.0 318.3" fill="none" stroke="#4583bd" stroke-width="1.6"/>
<path d="M655.0 451.0 L752.5 451.0" fill="none" stroke="#4583bd" stroke-width="1.6"/>
<path d="M577.0 611.5 L745.0 610.0" fill="none" stroke="#4583bd" stroke-width="1.6"/>
<path d="M577.0 612.5 L745.0 612.0" fill="none" stroke="#4583bd" stroke-width="1.6"/>
<path d="M687.0 596.7 L726.0 604.7" fill="none" stroke="#4583bd" stroke-width="1.6"/>
<path d="M632.6 726.0 L738.0 725.0" fill="none" stroke="#4583bd" stroke-width="1.6"/>
<path d="M702.0 548.7 L689.0 765.0 L675.0 996.0" fill="none" stroke="#4583bd" stroke-width="1.6"/>
<path d="M743.5 431.0 L738.0 540.0 L726.0 765.0 L712.6 1003.5" fill="none" stroke="#4583bd" stroke-width="1.6"/>
<path d="M692.6 657.7 L687.0 765.0 L678.7 996.0" fill="none" stroke="#4583bd" stroke-width="1.6"/>
<path d="M698.0 801.0 L687.0 998.7" fill="none" stroke="#4583bd" stroke-width="1.6"/>
<path d="M527.0 811.6 L664.0 809.0 L733.0 806.0" fill="none" stroke="#4583bd" stroke-width="1.6"/>
<path d="M561.0 808.0 L733.0 808.5" fill="none" stroke="#4583bd" stroke-width="1.6"/>
<path d="M670.0 796.0 L698.0 802.4" fill="none" stroke="#4583bd" stroke-width="1.6"/>
<path d="M671.4 888.4 L688.4 892.8" fill="none" stroke="#4583bd" stroke-width="1.6"/>
<path d="M625.0 974.4 L625.0 986.6" fill="none" stroke="#4583bd" stroke-width="1.6"/>
<path d="M731.0 433.0 L745.0 433.0" fill="none" stroke="#4583bd" stroke-width="1.6"/>
<path d="M731.0 437.0 L745.0 440.0" fill="none" stroke="#4583bd" stroke-width="1.6"/>
<path d="M166.0 654.0 C168.1 655.3 172.8 655.8 178.5 661.7 C184.2 667.6 193.8 677.7 200.0 689.6 C206.2 701.5 211.4 718.0 215.6 733.0 C219.8 748.0 222.7 764.0 225.0 779.5 C227.3 795.0 229.3 812.1 229.6 826.0 C229.8 839.9 228.8 851.2 226.5 863.0 C224.2 874.8 220.0 886.7 215.6 897.0 C211.2 907.3 205.7 917.2 200.0 925.0 C194.3 932.8 187.8 939.9 181.6 943.7 C175.4 947.5 166.1 947.3 163.0 948.0" fill="none" stroke="#f3850a" stroke-width="3.5" stroke-linecap="round" stroke-linejoin="round"/>
<path d="M360.0 677.0 C364.2 680.8 378.3 689.5 385.0 700.0 C391.7 710.5 396.2 726.7 400.0 740.0 C403.8 753.3 407.0 766.7 408.0 780.0 C409.0 793.3 408.0 806.7 406.0 820.0 C404.0 833.3 400.3 846.7 396.0 860.0 C391.7 873.3 386.0 888.3 380.0 900.0 C374.0 911.7 366.7 922.8 360.0 930.0 C353.3 937.2 343.3 940.8 340.0 943.0" fill="none" stroke="#f3850a" stroke-width="3.5" stroke-linecap="round" stroke-linejoin="round"/>
<path d="M519.5 464.0 C523.1 462.8 532.4 459.7 541.0 457.0 C549.6 454.3 560.6 450.8 571.4 448.0 C582.2 445.2 595.8 442.3 606.0 440.3 C616.2 438.3 624.7 437.1 632.5 436.0 C640.3 434.9 649.4 434.3 652.8 434.0" fill="none" stroke="#f3850a" stroke-width="3.5" stroke-linecap="round" stroke-linejoin="round"/>
<path d="M654.8 437.3 C659.0 437.0 672.2 436.1 680.0 435.5 C687.8 434.9 692.9 434.3 701.6 434.0 C710.3 433.7 726.9 433.7 732.0 433.6" fill="none" stroke="#f3850a" stroke-width="3.5" stroke-linecap="round" stroke-linejoin="round"/>
<path d="M516.5 543.5 C517.5 540.8 519.2 531.4 522.6 527.0 C526.0 522.6 532.1 518.7 536.8 517.0 C541.5 515.3 545.6 516.0 551.0 517.0 C556.4 518.0 566.0 521.3 569.4 523.0 C572.8 524.7 568.3 524.9 571.4 527.0 C574.5 529.1 582.3 531.6 587.7 535.4 C593.1 539.2 599.5 545.6 604.0 549.6 C608.5 553.6 609.7 555.2 615.0 559.6 C620.3 564.0 632.5 573.3 636.0 576.0" fill="none" stroke="#f3850a" stroke-width="3.5" stroke-linecap="round" stroke-linejoin="round"/>
<path d="M638.0 572.7 C641.8 576.3 654.7 587.6 661.0 594.5 C667.3 601.4 672.7 608.6 676.0 614.0 C679.3 619.4 680.0 623.2 680.6 627.0 C681.2 630.8 679.7 635.3 679.5 637.0" fill="none" stroke="#f3850a" stroke-width="3.5" stroke-linecap="round" stroke-linejoin="round"/>
<path d="M471.6 626.0 C472.3 623.8 474.4 617.1 476.0 613.0 C477.6 608.9 479.3 604.8 481.0 601.5 C482.7 598.2 484.6 594.8 486.4 593.0 C488.2 591.2 489.6 590.2 492.0 590.5 C494.4 590.8 491.8 591.6 500.7 594.5 C509.6 597.4 527.0 601.4 545.4 607.6 C563.8 613.8 593.4 625.1 610.8 631.6 C628.2 638.1 639.8 643.2 650.0 646.8 C660.2 650.4 668.0 651.2 671.8 653.4 C675.6 655.6 672.8 658.9 673.0 660.0" fill="none" stroke="#f3850a" stroke-width="3.5" stroke-linecap="round" stroke-linejoin="round"/>
<path d="M500.7 594.5 C502.7 595.6 505.7 595.6 512.7 601.0 C519.8 606.4 533.2 616.1 543.0 627.0 C552.8 637.9 563.2 653.3 571.6 666.4 C580.0 679.5 587.6 694.1 593.4 705.7 C599.2 717.3 602.8 726.1 606.4 736.0 C610.0 745.9 612.9 758.6 615.0 765.0 C617.1 771.4 617.3 767.2 619.0 774.5 C620.7 781.8 622.3 794.8 625.4 808.5 C628.5 822.2 633.5 841.7 637.5 857.0 C641.5 872.3 646.8 888.4 649.6 900.5 C652.4 912.6 654.5 920.7 654.5 929.6 C654.5 938.5 652.9 947.4 649.6 953.8 C646.4 960.2 637.4 965.6 635.0 968.0" fill="none" stroke="#f3850a" stroke-width="3.5" stroke-linecap="round" stroke-linejoin="round"/>
<path d="M455.0 652.0 C457.5 652.5 464.4 650.4 470.0 655.0 C475.6 659.6 479.8 669.6 488.7 679.5 C497.6 689.4 511.6 700.1 523.6 714.4 C535.6 728.6 551.8 751.4 560.7 765.0 C569.6 778.6 571.9 784.7 577.0 796.0 C582.1 807.3 586.7 822.5 591.5 832.7 C596.3 842.9 601.2 849.0 606.0 857.0 C610.8 865.0 615.2 871.3 620.5 881.0 C625.8 890.7 633.1 903.7 637.5 915.0 C641.9 926.3 645.4 943.3 647.0 949.0" fill="none" stroke="#f3850a" stroke-width="3.5" stroke-linecap="round" stroke-linejoin="round"/>
<path d="M436.0 660.0 C439.2 658.5 449.3 652.2 455.0 651.0 C460.7 649.8 465.8 651.2 470.0 653.0 C474.2 654.8 476.2 651.8 480.0 662.0 C483.8 672.2 490.5 696.8 493.0 714.0 C495.5 731.2 494.3 751.3 495.0 765.0 C495.7 778.7 497.5 784.7 497.0 796.0 C496.5 807.3 494.8 822.5 492.0 832.7 C489.2 842.9 485.3 847.5 480.0 857.0 C474.7 866.5 466.7 879.5 460.0 890.0 C453.3 900.5 445.8 911.7 440.0 920.0 C434.2 928.3 429.7 935.8 425.0 940.0 C420.3 944.2 414.2 944.2 412.0 945.0" fill="none" stroke="#f3850a" stroke-width="3.5" stroke-linecap="round" stroke-linejoin="round"/>
<path d="M710.8 435.6 L682.7 540 L663 612 L632.6 725 L527 810" fill="none" stroke="#000" stroke-width="1.6"/>
<path d="M749.5 312 L743.5 432" fill="none" stroke="#000" stroke-width="3.6"/>
<path d="M764.7 255 L758 340 L748 420" fill="none" stroke="#000" stroke-width="3" stroke-dasharray="3.2 4.6"/>
<rect x="559" y="311" width="4" height="4" fill="#000"/>
<path d="M233.7 988.3 L615 985.5" stroke="#000" stroke-width="1.6"/>
<path d="M256.5 992 L503 988.9" stroke="#000" stroke-width="1.4" stroke-dasharray="3 2.2"/>
<path d="M443 988 L447 986.5" stroke="#f28105" stroke-width="1.6"/>
<path d="M639.0 696.5 C635.8 697.2 624.9 696.6 619.5 701.0 C614.1 705.4 608.0 715.9 606.4 723.0 C604.8 730.1 609.2 740.3 609.7 743.8" fill="none" stroke="#10f010" stroke-width="1.8"/>
<circle cx="668" cy="310.8" r="5.5" fill="#10f010"/>
<circle cx="727" cy="311.7" r="6" fill="#10f010"/>
<circle cx="602" cy="372.6" r="5.5" fill="#10f010"/>
<circle cx="606.6" cy="440.7" r="5.5" fill="#10f010"/>
<circle cx="702" cy="433.6" r="6" fill="#10f010"/>
<circle cx="500.4" cy="595.8" r="5.5" fill="#10f010"/>
<circle cx="610" cy="722" r="5.5" fill="#10f010"/>
<circle cx="491" cy="804.8" r="5.5" fill="#10f010"/>
<circle cx="527" cy="800.7" r="5.5" fill="#10f010"/>
<circle cx="635.8" cy="894" r="5.5" fill="#10f010"/>
<circle cx="751.5" cy="337" r="2.8" fill="#10f010"/>
</g>
<clipPath id="cfr"><path d="M1276.7 693.3 C1281.1 693.8 1292.0 695.8 1303.0 696.3 C1314.0 696.8 1326.3 696.4 1343.0 696.3 C1359.7 696.2 1390.5 696.4 1403.0 695.8 C1415.5 695.2 1413.0 694.2 1418.0 692.5 C1423.0 690.8 1426.0 687.6 1433.0 685.8 C1440.0 684.0 1451.3 683.8 1460.0 681.7 C1468.7 679.6 1478.0 676.0 1485.0 673.0 C1492.0 670.0 1497.0 666.9 1501.7 663.7 C1506.4 660.5 1510.0 656.5 1513.0 654.0 C1516.0 651.5 1516.7 651.3 1520.0 649.0 C1523.3 646.7 1529.2 643.2 1533.0 640.0 C1536.8 636.8 1540.3 633.3 1543.0 630.0 C1545.7 626.7 1547.6 623.0 1549.0 620.0 C1550.4 617.0 1550.9 614.8 1551.5 612.0 C1552.1 609.2 1551.6 606.0 1552.7 603.0 C1553.8 600.0 1556.2 596.0 1558.0 594.0 C1559.8 592.0 1561.5 594.3 1563.6 591.0 C1565.7 587.7 1568.6 580.8 1570.8 574.0 C1573.0 567.2 1575.0 558.2 1577.0 550.0 C1579.0 541.8 1580.8 532.4 1583.0 525.0 C1585.2 517.6 1587.8 513.3 1590.5 505.7 C1593.2 498.1 1596.2 488.2 1599.0 479.5 C1601.8 470.8 1605.0 460.6 1607.0 453.4 C1609.0 446.1 1609.6 441.4 1611.0 436.0 C1612.4 430.6 1613.6 427.2 1615.6 420.7 C1617.6 414.1 1620.3 404.7 1623.0 396.7 C1625.7 388.7 1628.7 382.1 1632.0 372.7 C1635.3 363.2 1640.9 346.1 1642.8 340.0 C1644.7 333.9 1642.1 339.5 1643.5 336.3 C1644.9 333.1 1649.0 326.7 1651.0 321.0 C1653.0 315.3 1654.4 308.3 1655.7 302.0 C1657.0 295.7 1657.8 289.6 1658.6 283.4 C1659.4 277.1 1660.7 269.9 1660.5 264.5 C1660.3 259.1 1659.2 255.8 1657.6 251.0 C1656.0 246.2 1652.6 240.4 1651.0 236.0 C1649.4 231.6 1647.8 228.4 1648.0 224.8 C1648.2 221.2 1649.9 217.1 1652.0 214.4 C1654.1 211.7 1657.2 210.1 1660.5 208.7 C1663.8 207.3 1668.0 206.2 1671.8 206.0 C1675.5 205.8 1678.6 206.1 1683.0 207.8 C1687.4 209.5 1693.2 213.5 1698.0 216.3 C1702.8 219.1 1708.9 224.0 1711.5 224.8 C1714.1 225.6 1712.3 223.2 1713.4 221.0 C1714.5 218.8 1716.1 214.6 1718.0 211.6 C1719.9 208.6 1721.4 205.2 1724.7 203.0 C1728.0 200.8 1734.0 198.6 1738.0 198.3 C1742.0 198.0 1745.7 198.9 1749.0 201.0 C1752.3 203.1 1755.5 206.6 1757.8 210.6 C1760.0 214.6 1761.5 220.2 1762.5 224.8 C1763.5 229.4 1762.9 235.5 1763.5 238.0 C1764.1 240.5 1764.9 239.5 1766.0 240.0 C1767.1 240.5 1767.8 239.7 1770.0 240.9 C1772.2 242.2 1776.8 244.2 1779.5 247.5 C1782.2 250.8 1784.7 256.0 1786.0 260.7 C1787.3 265.4 1787.4 271.1 1787.6 275.8 C1787.8 280.5 1786.5 286.5 1787.0 289.0 C1787.5 291.5 1788.7 289.9 1790.9 291.0 C1793.1 292.1 1797.5 293.2 1800.0 295.7 C1802.5 298.2 1804.7 301.8 1806.0 306.0 C1807.3 310.2 1807.7 316.0 1807.9 321.0 C1808.1 326.0 1806.7 332.5 1807.0 336.0 C1807.3 339.5 1808.1 339.4 1809.7 342.0 C1811.3 344.6 1814.8 347.4 1816.4 351.4 C1818.0 355.4 1819.1 360.6 1819.4 366.0 C1819.7 371.4 1818.9 377.8 1818.0 383.6 C1817.1 389.4 1815.2 395.9 1814.0 401.0 C1812.8 406.1 1810.5 409.7 1810.7 414.0 C1810.9 418.3 1813.8 421.9 1815.0 427.0 C1816.2 432.1 1817.1 438.0 1818.0 444.6 C1818.9 451.2 1819.9 459.8 1820.5 466.4 C1821.1 473.0 1821.6 477.4 1821.6 484.0 C1821.6 490.6 1820.5 497.7 1820.5 505.7 C1820.5 513.7 1821.6 521.9 1821.6 531.8 C1821.6 541.7 1821.1 558.0 1820.5 565.0 C1819.9 572.0 1818.5 568.4 1817.8 574.0 C1817.1 579.6 1817.0 590.3 1816.6 598.4 C1816.2 606.5 1815.5 614.6 1815.4 622.7 C1815.3 630.8 1816.0 639.8 1816.0 647.0 C1816.0 654.2 1815.9 658.0 1815.4 666.0 C1814.9 674.0 1814.0 686.1 1813.0 695.0 C1812.0 703.9 1810.4 711.4 1809.4 719.5 C1808.4 727.6 1807.8 735.7 1807.0 743.8 C1806.2 751.9 1805.0 762.0 1804.5 768.0 C1804.0 774.0 1803.8 774.2 1803.7 780.0 C1803.6 785.8 1804.1 793.3 1804.0 803.0 C1803.9 812.7 1803.3 828.3 1803.0 838.0 C1802.7 847.7 1802.5 853.6 1801.9 861.4 C1801.3 869.2 1800.5 876.9 1799.5 884.7 C1798.5 892.5 1797.6 900.3 1796.0 908.0 C1794.4 915.7 1792.2 923.7 1790.0 931.0 C1787.8 938.3 1785.7 945.8 1783.0 952.0 C1780.3 958.2 1777.5 963.7 1774.0 968.4 C1770.5 973.1 1766.7 976.5 1762.0 980.0 C1757.3 983.5 1751.8 987.0 1746.0 989.3 C1740.2 991.6 1732.8 993.0 1727.4 994.0 C1722.0 995.0 1718.2 995.4 1713.5 995.0 C1708.8 994.6 1704.6 993.3 1699.5 991.6 C1694.4 989.9 1688.1 987.0 1683.0 984.7 C1677.9 982.4 1674.0 979.7 1669.0 977.7 C1664.0 975.8 1659.5 974.5 1653.0 973.0 C1646.5 971.5 1637.5 969.6 1629.8 968.4 C1622.0 967.2 1614.3 966.8 1606.5 966.0 C1598.7 965.2 1590.8 964.3 1583.0 963.7 C1575.2 963.1 1567.8 962.9 1560.0 962.6 C1552.2 962.3 1547.3 962.1 1536.0 961.8 C1524.7 961.5 1506.7 961.0 1492.0 961.0 C1477.3 961.0 1462.6 961.1 1448.0 961.8 C1433.4 962.5 1419.1 963.7 1404.6 965.0 C1390.1 966.3 1375.4 967.9 1360.8 969.7 C1346.2 971.5 1330.5 974.0 1317.0 976.0 C1303.5 978.0 1286.0 981.0 1279.8 982.0 C1279.1 982.1 1278.7 983.4 1275.4 982.8 C1272.1 982.2 1265.5 982.0 1260.0 978.4 C1254.5 974.8 1248.1 970.5 1242.6 961.0 C1237.1 951.5 1230.8 935.4 1227.0 921.5 C1223.2 907.6 1221.0 893.8 1219.8 877.7 C1218.6 861.6 1218.6 844.0 1219.8 825.0 C1221.0 806.0 1224.0 781.5 1227.0 764.0 C1230.0 746.5 1233.2 730.7 1238.0 720.0 C1242.8 709.3 1249.2 704.5 1255.7 700.0 C1262.2 695.5 1273.2 694.4 1276.7 693.3 Z"/></clipPath>
<clipPath id="ccr"><path d="M1276.7 693.3 C1279.4 694.4 1288.3 696.1 1293.0 700.0 C1297.7 703.9 1301.7 710.0 1305.0 716.7 C1308.3 723.4 1309.5 727.8 1313.0 740.0 C1316.5 752.2 1322.8 774.3 1325.8 790.0 C1328.8 805.7 1331.0 817.9 1331.0 834.0 C1331.0 850.1 1328.9 870.5 1325.8 886.5 C1322.7 902.5 1317.7 916.9 1312.6 930.0 C1307.5 943.1 1300.5 956.3 1295.0 965.0 C1289.5 973.7 1282.3 979.2 1279.8 982.0 C1279.1 982.1 1278.7 983.4 1275.4 982.8 C1272.1 982.2 1265.5 982.0 1260.0 978.4 C1254.5 974.8 1248.1 970.5 1242.6 961.0 C1237.1 951.5 1230.8 935.4 1227.0 921.5 C1223.2 907.6 1221.0 893.8 1219.8 877.7 C1218.6 861.6 1218.6 844.0 1219.8 825.0 C1221.0 806.0 1224.0 781.5 1227.0 764.0 C1230.0 746.5 1233.2 730.7 1238.0 720.0 C1242.8 709.3 1249.2 704.5 1255.7 700.0 C1262.2 695.5 1273.2 694.4 1276.7 693.3 Z"/></clipPath>
<linearGradient id="gRbase" gradientUnits="userSpaceOnUse" x1="0" y1="660" x2="0" y2="1000">
<stop offset="0" stop-color="#7f6b5f"/><stop offset="0.25" stop-color="#8c745d"/><stop offset="0.6" stop-color="#87705a"/><stop offset="0.8" stop-color="#796652"/><stop offset="0.9" stop-color="#5f5147"/><stop offset="1" stop-color="#5f5147"/></linearGradient>
<g clip-path="url(#cvr)">
<path d="M1698 204 L1829 190 L1829 992 L1640 992 L1700 600 Z" fill="#e6e9f5" opacity="0.55"/>
<path d="M1190 994 L1420 981 L1830 986 L1906 991 L1906 994 L1500 998 Z" fill="#dde1ef" opacity="0.55"/>
<circle cx="1672" cy="204.5" r="6" fill="#10f010"/>
<circle cx="1738" cy="197" r="6" fill="#10f010"/>
<circle cx="1768.7" cy="238.5" r="6" fill="#10f010"/>
<circle cx="1784" cy="286.5" r="6" fill="#10f010"/>
<circle cx="1816" cy="685" r="4.5" fill="#10f010"/>
<circle cx="1716.5" cy="995.5" r="6" fill="#10f010"/>
<circle cx="1760.5" cy="982" r="5" fill="#10f010"/>
<circle cx="1281" cy="981.5" r="5.5" fill="#10f010"/>
<circle cx="1451.4" cy="962" r="5.5" fill="#10f010"/>
<circle cx="1531.6" cy="962" r="5.5" fill="#10f010"/>
<path d="M1276.7 693.3 C1281.1 693.8 1292.0 695.8 1303.0 696.3 C1314.0 696.8 1326.3 696.4 1343.0 696.3 C1359.7 696.2 1390.5 696.4 1403.0 695.8 C1415.5 695.2 1413.0 694.2 1418.0 692.5 C1423.0 690.8 1426.0 687.6 1433.0 685.8 C1440.0 684.0 1451.3 683.8 1460.0 681.7 C1468.7 679.6 1478.0 676.0 1485.0 673.0 C1492.0 670.0 1497.0 666.9 1501.7 663.7 C1506.4 660.5 1510.0 656.5 1513.0 654.0 C1516.0 651.5 1516.7 651.3 1520.0 649.0 C1523.3 646.7 1529.2 643.2 1533.0 640.0 C1536.8 636.8 1540.3 633.3 1543.0 630.0 C1545.7 626.7 1547.6 623.0 1549.0 620.0 C1550.4 617.0 1550.9 614.8 1551.5 612.0 C1552.1 609.2 1551.6 606.0 1552.7 603.0 C1553.8 600.0 1556.2 596.0 1558.0 594.0 C1559.8 592.0 1561.5 594.3 1563.6 591.0 C1565.7 587.7 1568.6 580.8 1570.8 574.0 C1573.0 567.2 1575.0 558.2 1577.0 550.0 C1579.0 541.8 1580.8 532.4 1583.0 525.0 C1585.2 517.6 1587.8 513.3 1590.5 505.7 C1593.2 498.1 1596.2 488.2 1599.0 479.5 C1601.8 470.8 1605.0 460.6 1607.0 453.4 C1609.0 446.1 1609.6 441.4 1611.0 436.0 C1612.4 430.6 1613.6 427.2 1615.6 420.7 C1617.6 414.1 1620.3 404.7 1623.0 396.7 C1625.7 388.7 1628.7 382.1 1632.0 372.7 C1635.3 363.2 1640.9 346.1 1642.8 340.0 C1644.7 333.9 1642.1 339.5 1643.5 336.3 C1644.9 333.1 1649.0 326.7 1651.0 321.0 C1653.0 315.3 1654.4 308.3 1655.7 302.0 C1657.0 295.7 1657.8 289.6 1658.6 283.4 C1659.4 277.1 1660.7 269.9 1660.5 264.5 C1660.3 259.1 1659.2 255.8 1657.6 251.0 C1656.0 246.2 1652.6 240.4 1651.0 236.0 C1649.4 231.6 1647.8 228.4 1648.0 224.8 C1648.2 221.2 1649.9 217.1 1652.0 214.4 C1654.1 211.7 1657.2 210.1 1660.5 208.7 C1663.8 207.3 1668.0 206.2 1671.8 206.0 C1675.5 205.8 1678.6 206.1 1683.0 207.8 C1687.4 209.5 1693.2 213.5 1698.0 216.3 C1702.8 219.1 1708.9 224.0 1711.5 224.8 C1714.1 225.6 1712.3 223.2 1713.4 221.0 C1714.5 218.8 1716.1 214.6 1718.0 211.6 C1719.9 208.6 1721.4 205.2 1724.7 203.0 C1728.0 200.8 1734.0 198.6 1738.0 198.3 C1742.0 198.0 1745.7 198.9 1749.0 201.0 C1752.3 203.1 1755.5 206.6 1757.8 210.6 C1760.0 214.6 1761.5 220.2 1762.5 224.8 C1763.5 229.4 1762.9 235.5 1763.5 238.0 C1764.1 240.5 1764.9 239.5 1766.0 240.0 C1767.1 240.5 1767.8 239.7 1770.0 240.9 C1772.2 242.2 1776.8 244.2 1779.5 247.5 C1782.2 250.8 1784.7 256.0 1786.0 260.7 C1787.3 265.4 1787.4 271.1 1787.6 275.8 C1787.8 280.5 1786.5 286.5 1787.0 289.0 C1787.5 291.5 1788.7 289.9 1790.9 291.0 C1793.1 292.1 1797.5 293.2 1800.0 295.7 C1802.5 298.2 1804.7 301.8 1806.0 306.0 C1807.3 310.2 1807.7 316.0 1807.9 321.0 C1808.1 326.0 1806.7 332.5 1807.0 336.0 C1807.3 339.5 1808.1 339.4 1809.7 342.0 C1811.3 344.6 1814.8 347.4 1816.4 351.4 C1818.0 355.4 1819.1 360.6 1819.4 366.0 C1819.7 371.4 1818.9 377.8 1818.0 383.6 C1817.1 389.4 1815.2 395.9 1814.0 401.0 C1812.8 406.1 1810.5 409.7 1810.7 414.0 C1810.9 418.3 1813.8 421.9 1815.0 427.0 C1816.2 432.1 1817.1 438.0 1818.0 444.6 C1818.9 451.2 1819.9 459.8 1820.5 466.4 C1821.1 473.0 1821.6 477.4 1821.6 484.0 C1821.6 490.6 1820.5 497.7 1820.5 505.7 C1820.5 513.7 1821.6 521.9 1821.6 531.8 C1821.6 541.7 1821.1 558.0 1820.5 565.0 C1819.9 572.0 1818.5 568.4 1817.8 574.0 C1817.1 579.6 1817.0 590.3 1816.6 598.4 C1816.2 606.5 1815.5 614.6 1815.4 622.7 C1815.3 630.8 1816.0 639.8 1816.0 647.0 C1816.0 654.2 1815.9 658.0 1815.4 666.0 C1814.9 674.0 1814.0 686.1 1813.0 695.0 C1812.0 703.9 1810.4 711.4 1809.4 719.5 C1808.4 727.6 1807.8 735.7 1807.0 743.8 C1806.2 751.9 1805.0 762.0 1804.5 768.0 C1804.0 774.0 1803.8 774.2 1803.7 780.0 C1803.6 785.8 1804.1 793.3 1804.0 803.0 C1803.9 812.7 1803.3 828.3 1803.0 838.0 C1802.7 847.7 1802.5 853.6 1801.9 861.4 C1801.3 869.2 1800.5 876.9 1799.5 884.7 C1798.5 892.5 1797.6 900.3 1796.0 908.0 C1794.4 915.7 1792.2 923.7 1790.0 931.0 C1787.8 938.3 1785.7 945.8 1783.0 952.0 C1780.3 958.2 1777.5 963.7 1774.0 968.4 C1770.5 973.1 1766.7 976.5 1762.0 980.0 C1757.3 983.5 1751.8 987.0 1746.0 989.3 C1740.2 991.6 1732.8 993.0 1727.4 994.0 C1722.0 995.0 1718.2 995.4 1713.5 995.0 C1708.8 994.6 1704.6 993.3 1699.5 991.6 C1694.4 989.9 1688.1 987.0 1683.0 984.7 C1677.9 982.4 1674.0 979.7 1669.0 977.7 C1664.0 975.8 1659.5 974.5 1653.0 973.0 C1646.5 971.5 1637.5 969.6 1629.8 968.4 C1622.0 967.2 1614.3 966.8 1606.5 966.0 C1598.7 965.2 1590.8 964.3 1583.0 963.7 C1575.2 963.1 1567.8 962.9 1560.0 962.6 C1552.2 962.3 1547.3 962.1 1536.0 961.8 C1524.7 961.5 1506.7 961.0 1492.0 961.0 C1477.3 961.0 1462.6 961.1 1448.0 961.8 C1433.4 962.5 1419.1 963.7 1404.6 965.0 C1390.1 966.3 1375.4 967.9 1360.8 969.7 C1346.2 971.5 1330.5 974.0 1317.0 976.0 C1303.5 978.0 1286.0 981.0 1279.8 982.0 C1279.1 982.1 1278.7 983.4 1275.4 982.8 C1272.1 982.2 1265.5 982.0 1260.0 978.4 C1254.5 974.8 1248.1 970.5 1242.6 961.0 C1237.1 951.5 1230.8 935.4 1227.0 921.5 C1223.2 907.6 1221.0 893.8 1219.8 877.7 C1218.6 861.6 1218.6 844.0 1219.8 825.0 C1221.0 806.0 1224.0 781.5 1227.0 764.0 C1230.0 746.5 1233.2 730.7 1238.0 720.0 C1242.8 709.3 1249.2 704.5 1255.7 700.0 C1262.2 695.5 1273.2 694.4 1276.7 693.3 Z" fill="url(#gRbase)"/>
<g clip-path="url(#cfr)">
<ellipse cx="1710" cy="480" rx="120" ry="170" fill="#7d685d" filter="url(#b25)"/>
<ellipse cx="1700" cy="720" rx="110" ry="130" fill="#836e65" filter="url(#b25)"/>
<ellipse cx="1725" cy="300" rx="90" ry="90" fill="#8a6d5f" filter="url(#b25)"/>
<ellipse cx="1690" cy="890" rx="110" ry="75" fill="#8c746a" filter="url(#b25)"/>
<ellipse cx="1773" cy="666" rx="10" ry="45" transform="rotate(8 1773 666)" fill="#6f5152" filter="url(#b8)" opacity="0.8"/>
<ellipse cx="1528" cy="705" rx="30" ry="12" transform="rotate(25 1528 705)" fill="#70525a" filter="url(#b8)" opacity="0.7"/>
<ellipse cx="1740" cy="870" rx="16" ry="50" transform="rotate(-25 1740 870)" fill="#6c5650" filter="url(#b8)" opacity="0.7"/>
<ellipse cx="1480" cy="980" rx="230" ry="18" fill="#574a42" filter="url(#b8)" opacity="0.7"/>
<path d="M1807.0 444.6 C1807.4 448.2 1808.9 459.8 1809.5 466.4 C1810.1 473.0 1810.6 477.4 1810.6 484.0 C1810.6 490.6 1809.5 497.7 1809.5 505.7 C1809.5 513.7 1810.6 521.9 1810.6 531.8 C1810.6 541.7 1810.1 558.0 1809.5 565.0 C1808.9 572.0 1807.5 568.4 1806.8 574.0 C1806.1 579.6 1806.0 590.3 1805.6 598.4 C1805.2 606.5 1804.5 614.6 1804.4 622.7 C1804.3 630.8 1805.0 639.8 1805.0 647.0 C1805.0 654.2 1804.9 658.0 1804.4 666.0 C1803.9 674.0 1803.0 686.1 1802.0 695.0 C1801.0 703.9 1799.4 711.4 1798.4 719.5 C1797.4 727.6 1796.8 735.7 1796.0 743.8 C1795.2 751.9 1794.0 758.1 1793.5 768.0 C1793.0 777.9 1793.2 791.3 1793.0 803.0 C1792.8 814.7 1792.3 828.3 1792.0 838.0 C1791.7 847.7 1791.5 853.6 1790.9 861.4 C1790.3 869.2 1789.5 876.9 1788.5 884.7 C1787.5 892.5 1786.6 900.3 1785.0 908.0 C1783.4 915.7 1781.7 923.2 1779.0 931.0 C1776.3 938.8 1770.7 951.0 1769.0 955.0" fill="none" stroke="#a3877a" stroke-width="14" filter="url(#b4)" opacity="0.75"/>
<path d="M1798 430 C1801 470 1797 520 1794 560" fill="none" stroke="#bfaaa2" stroke-width="7" filter="url(#b2)" opacity="0.4"/>
<path d="M1485.0 673.0 C1487.8 671.5 1497.0 666.9 1501.7 663.7 C1506.4 660.5 1510.0 656.5 1513.0 654.0 C1516.0 651.5 1516.7 651.3 1520.0 649.0 C1523.3 646.7 1529.2 643.2 1533.0 640.0 C1536.8 636.8 1540.3 633.3 1543.0 630.0 C1545.7 626.7 1547.6 623.0 1549.0 620.0 C1550.4 617.0 1550.9 614.8 1551.5 612.0 C1552.1 609.2 1551.6 606.0 1552.7 603.0 C1553.8 600.0 1556.2 596.0 1558.0 594.0 C1559.8 592.0 1561.5 594.3 1563.6 591.0 C1565.7 587.7 1568.6 580.8 1570.8 574.0 C1573.0 567.2 1575.0 558.2 1577.0 550.0 C1579.0 541.8 1580.8 532.4 1583.0 525.0 C1585.2 517.6 1587.8 513.3 1590.5 505.7 C1593.2 498.1 1596.2 488.2 1599.0 479.5 C1601.8 470.8 1605.0 460.6 1607.0 453.4 C1609.0 446.1 1609.6 441.4 1611.0 436.0 C1612.4 430.6 1613.6 427.2 1615.6 420.7 C1617.6 414.1 1620.3 404.7 1623.0 396.7 C1625.7 388.7 1628.7 382.1 1632.0 372.7 C1635.3 363.2 1640.9 346.1 1642.8 340.0 C1644.7 333.9 1643.4 336.9 1643.5 336.3" fill="none" stroke="#3d332c" stroke-width="9" filter="url(#b4)" opacity="0.75"/>
<path d="M1276.7 693.3 C1281.1 693.8 1292.0 695.8 1303.0 696.3 C1314.0 696.8 1326.3 696.4 1343.0 696.3 C1359.7 696.2 1390.5 696.4 1403.0 695.8 C1415.5 695.2 1413.0 694.2 1418.0 692.5 C1423.0 690.8 1426.0 687.6 1433.0 685.8 C1440.0 684.0 1451.3 683.8 1460.0 681.7 C1468.7 679.6 1478.0 676.0 1485.0 673.0 C1492.0 670.0 1498.9 665.2 1501.7 663.7" fill="none" stroke="#46392f" stroke-width="10" filter="url(#b4)" opacity="0.6"/>
<path d="M1797.6 440 C1800 480 1796 520 1794 556" fill="none" stroke="#cbbcb6" stroke-width="2" filter="url(#b1)" opacity="0.55" stroke-dasharray="14 6 5 9"/>
<ellipse cx="1789" cy="376" rx="5" ry="12" transform="rotate(-20 1789 376)" fill="#c9b8b4" filter="url(#b2)" opacity="0.8"/>
<path d="M1781 366 L1787 370 L1792 366" fill="none" stroke="#f3eded" stroke-width="2" filter="url(#b1)" opacity="0.9"/>
<path d="M1642.8 525 L1660 516 L1682 510" fill="none" stroke="#c9bdb6" stroke-width="2" filter="url(#b1)" opacity="0.8"/>
<ellipse cx="1690" cy="245" rx="14" ry="22" transform="rotate(-15 1690 245)" fill="#a88b7d" filter="url(#b4)" opacity="0.75"/>
<ellipse cx="1744" cy="222" rx="9" ry="16" transform="rotate(5 1744 222)" fill="#a88b7d" filter="url(#b4)" opacity="0.75"/>
<ellipse cx="1776" cy="268" rx="7" ry="16" transform="rotate(10 1776 268)" fill="#a88b7d" filter="url(#b4)" opacity="0.75"/>
<ellipse cx="1796" cy="315" rx="6" ry="14" transform="rotate(10 1796 315)" fill="#a88b7d" filter="url(#b4)" opacity="0.75"/>
<ellipse cx="1808" cy="362" rx="5" ry="10" transform="rotate(5 1808 362)" fill="#a88b7d" filter="url(#b4)" opacity="0.75"/>
<path d="M1711.5 225.0 C1710.9 230.0 1709.1 244.7 1707.7 255.0 C1706.3 265.3 1704.9 276.3 1703.0 287.0 C1701.1 297.7 1698.5 310.5 1696.4 319.3 C1694.4 328.1 1693.1 332.9 1690.7 340.0 C1688.3 347.1 1683.5 358.3 1682.0 362.0" fill="none" stroke="#453830" stroke-width="11" filter="url(#b4)" opacity="0.6"/>
<path d="M1762.5 240.3 C1760.6 241.0 1754.0 242.5 1751.0 244.6 C1748.0 246.7 1746.5 248.8 1744.6 253.0 C1742.7 257.2 1741.2 263.7 1739.8 270.0 C1738.4 276.3 1737.6 283.7 1736.0 291.0 C1734.4 298.3 1732.9 306.1 1730.4 313.6 C1727.9 321.2 1723.8 328.7 1721.0 336.3 C1718.2 343.9 1715.6 353.1 1713.4 359.0 C1711.2 364.9 1708.9 369.8 1708.0 372.0" fill="none" stroke="#453830" stroke-width="11" filter="url(#b4)" opacity="0.6"/>
<path d="M1790.9 291.0 C1789.3 291.0 1784.4 290.4 1781.4 291.0 C1778.4 291.6 1775.8 291.6 1773.0 294.7 C1770.2 297.8 1767.1 303.8 1764.4 309.8 C1761.7 315.8 1759.0 322.4 1756.8 330.6 C1754.6 338.8 1753.1 350.8 1751.0 359.0 C1748.9 367.2 1745.2 376.5 1744.0 380.0" fill="none" stroke="#453830" stroke-width="11" filter="url(#b4)" opacity="0.6"/>
<path d="M1809.7 342.0 C1808.1 341.5 1803.5 338.7 1800.0 339.0 C1796.5 339.3 1792.1 341.7 1789.0 343.8 C1785.9 345.9 1784.2 348.4 1781.4 351.4 C1778.6 354.4 1774.7 357.9 1772.0 362.0 C1769.3 366.1 1768.4 368.8 1765.0 376.0 C1761.6 383.2 1754.8 397.7 1751.8 405.4 C1748.8 413.1 1747.8 419.2 1747.0 422.0" fill="none" stroke="#453830" stroke-width="11" filter="url(#b4)" opacity="0.6"/>
<path d="M1711.5 225.0 C1710.9 230.0 1709.1 244.7 1707.7 255.0 C1706.3 265.3 1704.9 276.3 1703.0 287.0 C1701.1 297.7 1697.5 313.9 1696.4 319.3" fill="none" stroke="#2c231e" stroke-width="2.2" filter="url(#b1)" opacity="0.95"/>
<path d="M1703.0 287.0 C1701.9 292.4 1698.5 310.5 1696.4 319.3 C1694.4 328.1 1693.1 332.9 1690.7 340.0 C1688.3 347.1 1683.5 358.3 1682.0 362.0" fill="none" stroke="#43362f" stroke-width="4" filter="url(#b2)" opacity="0.6"/>
<path d="M1762.5 240.3 C1760.6 241.0 1754.0 242.5 1751.0 244.6 C1748.0 246.7 1746.5 248.8 1744.6 253.0 C1742.7 257.2 1741.2 263.7 1739.8 270.0 C1738.4 276.3 1737.6 283.7 1736.0 291.0 C1734.4 298.3 1732.9 306.1 1730.4 313.6 C1727.9 321.2 1722.6 332.5 1721.0 336.3" fill="none" stroke="#2c231e" stroke-width="2.2" filter="url(#b1)" opacity="0.95"/>
<path d="M1730.4 313.6 C1728.8 317.4 1723.8 328.7 1721.0 336.3 C1718.2 343.9 1715.6 353.1 1713.4 359.0 C1711.2 364.9 1708.9 369.8 1708.0 372.0" fill="none" stroke="#43362f" stroke-width="4" filter="url(#b2)" opacity="0.6"/>
<path d="M1790.9 291.0 C1789.3 291.0 1784.4 290.4 1781.4 291.0 C1778.4 291.6 1775.8 291.6 1773.0 294.7 C1770.2 297.8 1767.1 303.8 1764.4 309.8 C1761.7 315.8 1758.1 327.1 1756.8 330.6" fill="none" stroke="#2c231e" stroke-width="2.2" filter="url(#b1)" opacity="0.95"/>
<path d="M1764.4 309.8 C1763.1 313.3 1759.0 322.4 1756.8 330.6 C1754.6 338.8 1753.1 350.8 1751.0 359.0 C1748.9 367.2 1745.2 376.5 1744.0 380.0" fill="none" stroke="#43362f" stroke-width="4" filter="url(#b2)" opacity="0.6"/>
<path d="M1809.7 342.0 C1808.1 341.5 1803.5 338.7 1800.0 339.0 C1796.5 339.3 1792.1 341.7 1789.0 343.8 C1785.9 345.9 1784.2 348.4 1781.4 351.4 C1778.6 354.4 1774.7 357.9 1772.0 362.0 C1769.3 366.1 1766.2 373.7 1765.0 376.0" fill="none" stroke="#2c231e" stroke-width="2.2" filter="url(#b1)" opacity="0.95"/>
<path d="M1772.0 362.0 C1770.8 364.3 1768.4 368.8 1765.0 376.0 C1761.6 383.2 1754.8 397.7 1751.8 405.4 C1748.8 413.1 1747.8 419.2 1747.0 422.0" fill="none" stroke="#43362f" stroke-width="4" filter="url(#b2)" opacity="0.6"/>
<path d="M1680.0 225.0 C1680.3 232.5 1682.7 252.5 1682.0 270.0 C1681.3 287.5 1679.7 310.0 1676.0 330.0 C1672.3 350.0 1662.7 380.0 1660.0 390.0" fill="none" stroke="#9d7c69" stroke-width="7" filter="url(#b4)" opacity="0.7"/>
<path d="M1738.0 215.0 C1737.5 222.5 1737.7 242.5 1735.0 260.0 C1732.3 277.5 1727.0 301.7 1722.0 320.0 C1717.0 338.3 1707.8 361.7 1705.0 370.0" fill="none" stroke="#9d7c69" stroke-width="7" filter="url(#b4)" opacity="0.7"/>
<path d="M1768.0 258.0 C1767.0 265.0 1765.8 284.7 1762.0 300.0 C1758.2 315.3 1747.8 341.7 1745.0 350.0" fill="none" stroke="#9d7c69" stroke-width="7" filter="url(#b4)" opacity="0.7"/>
<path d="M1793.0 305.0 C1792.2 310.0 1791.0 324.2 1788.0 335.0 C1785.0 345.8 1777.2 364.2 1775.0 370.0" fill="none" stroke="#9d7c69" stroke-width="7" filter="url(#b4)" opacity="0.7"/>
<path d="M1805.0 360.0 C1804.2 365.0 1802.5 380.0 1800.0 390.0 C1797.5 400.0 1791.7 415.0 1790.0 420.0" fill="none" stroke="#9d7c69" stroke-width="7" filter="url(#b4)" opacity="0.7"/>
<path d="M1285.7 693.3 C1288.4 694.4 1297.3 696.1 1302.0 700.0 C1306.7 703.9 1310.7 710.0 1314.0 716.7 C1317.3 723.4 1318.5 727.8 1322.0 740.0 C1325.5 752.2 1331.8 774.3 1334.8 790.0 C1337.8 805.7 1340.0 817.9 1340.0 834.0 C1340.0 850.1 1337.9 870.5 1334.8 886.5 C1331.7 902.5 1326.7 916.9 1321.6 930.0 C1316.5 943.1 1309.5 956.3 1304.0 965.0 C1298.5 973.7 1291.3 979.2 1288.8 982.0" fill="none" stroke="#9b8c84" stroke-width="14" filter="url(#b2)" opacity="0.8"/>
</g>
<path d="M1276.7 693.3 C1279.4 694.4 1288.3 696.1 1293.0 700.0 C1297.7 703.9 1301.7 710.0 1305.0 716.7 C1308.3 723.4 1309.5 727.8 1313.0 740.0 C1316.5 752.2 1322.8 774.3 1325.8 790.0 C1328.8 805.7 1331.0 817.9 1331.0 834.0 C1331.0 850.1 1328.9 870.5 1325.8 886.5 C1322.7 902.5 1317.7 916.9 1312.6 930.0 C1307.5 943.1 1300.5 956.3 1295.0 965.0 C1289.5 973.7 1282.3 979.2 1279.8 982.0 C1279.1 982.1 1278.7 983.4 1275.4 982.8 C1272.1 982.2 1265.5 982.0 1260.0 978.4 C1254.5 974.8 1248.1 970.5 1242.6 961.0 C1237.1 951.5 1230.8 935.4 1227.0 921.5 C1223.2 907.6 1221.0 893.8 1219.8 877.7 C1218.6 861.6 1218.6 844.0 1219.8 825.0 C1221.0 806.0 1224.0 781.5 1227.0 764.0 C1230.0 746.5 1233.2 730.7 1238.0 720.0 C1242.8 709.3 1249.2 704.5 1255.7 700.0 C1262.2 695.5 1273.2 694.4 1276.7 693.3 Z" fill="#6a686c"/>
<g clip-path="url(#ccr)">
<path d="M1284.0 700.0 C1286.0 702.8 1292.7 710.0 1296.0 716.7 C1299.3 723.4 1300.5 727.8 1304.0 740.0 C1307.5 752.2 1313.8 774.3 1316.8 790.0 C1319.8 805.7 1322.0 817.9 1322.0 834.0 C1322.0 850.1 1319.9 870.5 1316.8 886.5 C1313.7 902.5 1308.7 916.9 1303.6 930.0 C1298.5 943.1 1288.9 959.2 1286.0 965.0" fill="none" stroke="#858388" stroke-width="20" filter="url(#b4)" opacity="0.85"/>
<ellipse cx="1262" cy="720" rx="25" ry="25" fill="#7a787c" filter="url(#b14)" opacity="0.7"/>
<path d="M1279.8 982.0 C1279.1 982.1 1278.7 983.4 1275.4 982.8 C1272.1 982.2 1265.5 982.0 1260.0 978.4 C1254.5 974.8 1248.1 970.5 1242.6 961.0 C1237.1 951.5 1230.8 935.4 1227.0 921.5 C1223.2 907.6 1221.0 893.8 1219.8 877.7 C1218.6 861.6 1218.6 844.0 1219.8 825.0 C1221.0 806.0 1224.0 781.5 1227.0 764.0 C1230.0 746.5 1233.2 730.7 1238.0 720.0 C1242.8 709.3 1249.2 704.5 1255.7 700.0 C1262.2 695.5 1273.2 694.4 1276.7 693.3" fill="none" stroke="#454347" stroke-width="2" filter="url(#b1)" opacity="0.8"/>
</g>
<path d="M1276.7 693.3 C1281.1 693.8 1292.0 695.8 1303.0 696.3 C1314.0 696.8 1326.3 696.4 1343.0 696.3 C1359.7 696.2 1390.5 696.4 1403.0 695.8 C1415.5 695.2 1413.0 694.2 1418.0 692.5 C1423.0 690.8 1426.0 687.6 1433.0 685.8 C1440.0 684.0 1451.3 683.8 1460.0 681.7 C1468.7 679.6 1478.0 676.0 1485.0 673.0 C1492.0 670.0 1497.0 666.9 1501.7 663.7 C1506.4 660.5 1510.0 656.5 1513.0 654.0 C1516.0 651.5 1516.7 651.3 1520.0 649.0 C1523.3 646.7 1529.2 643.2 1533.0 640.0 C1536.8 636.8 1540.3 633.3 1543.0 630.0 C1545.7 626.7 1547.6 623.0 1549.0 620.0 C1550.4 617.0 1550.9 614.8 1551.5 612.0 C1552.1 609.2 1551.6 606.0 1552.7 603.0 C1553.8 600.0 1556.2 596.0 1558.0 594.0 C1559.8 592.0 1561.5 594.3 1563.6 591.0 C1565.7 587.7 1568.6 580.8 1570.8 574.0 C1573.0 567.2 1575.0 558.2 1577.0 550.0 C1579.0 541.8 1580.8 532.4 1583.0 525.0 C1585.2 517.6 1587.8 513.3 1590.5 505.7 C1593.2 498.1 1596.2 488.2 1599.0 479.5 C1601.8 470.8 1605.0 460.6 1607.0 453.4 C1609.0 446.1 1609.6 441.4 1611.0 436.0 C1612.4 430.6 1613.6 427.2 1615.6 420.7 C1617.6 414.1 1620.3 404.7 1623.0 396.7 C1625.7 388.7 1628.7 382.1 1632.0 372.7 C1635.3 363.2 1640.9 346.1 1642.8 340.0 C1644.7 333.9 1642.1 339.5 1643.5 336.3 C1644.9 333.1 1649.0 326.7 1651.0 321.0 C1653.0 315.3 1654.4 308.3 1655.7 302.0 C1657.0 295.7 1657.8 289.6 1658.6 283.4 C1659.4 277.1 1660.7 269.9 1660.5 264.5 C1660.3 259.1 1659.2 255.8 1657.6 251.0 C1656.0 246.2 1652.6 240.4 1651.0 236.0 C1649.4 231.6 1647.8 228.4 1648.0 224.8 C1648.2 221.2 1649.9 217.1 1652.0 214.4 C1654.1 211.7 1657.2 210.1 1660.5 208.7 C1663.8 207.3 1668.0 206.2 1671.8 206.0 C1675.5 205.8 1678.6 206.1 1683.0 207.8 C1687.4 209.5 1693.2 213.5 1698.0 216.3 C1702.8 219.1 1708.9 224.0 1711.5 224.8 C1714.1 225.6 1712.3 223.2 1713.4 221.0 C1714.5 218.8 1716.1 214.6 1718.0 211.6 C1719.9 208.6 1721.4 205.2 1724.7 203.0 C1728.0 200.8 1734.0 198.6 1738.0 198.3 C1742.0 198.0 1745.7 198.9 1749.0 201.0 C1752.3 203.1 1755.5 206.6 1757.8 210.6 C1760.0 214.6 1761.5 220.2 1762.5 224.8 C1763.5 229.4 1762.9 235.5 1763.5 238.0 C1764.1 240.5 1764.9 239.5 1766.0 240.0 C1767.1 240.5 1767.8 239.7 1770.0 240.9 C1772.2 242.2 1776.8 244.2 1779.5 247.5 C1782.2 250.8 1784.7 256.0 1786.0 260.7 C1787.3 265.4 1787.4 271.1 1787.6 275.8 C1787.8 280.5 1786.5 286.5 1787.0 289.0 C1787.5 291.5 1788.7 289.9 1790.9 291.0 C1793.1 292.1 1797.5 293.2 1800.0 295.7 C1802.5 298.2 1804.7 301.8 1806.0 306.0 C1807.3 310.2 1807.7 316.0 1807.9 321.0 C1808.1 326.0 1806.7 332.5 1807.0 336.0 C1807.3 339.5 1808.1 339.4 1809.7 342.0 C1811.3 344.6 1814.8 347.4 1816.4 351.4 C1818.0 355.4 1819.1 360.6 1819.4 366.0 C1819.7 371.4 1818.9 377.8 1818.0 383.6 C1817.1 389.4 1815.2 395.9 1814.0 401.0 C1812.8 406.1 1810.5 409.7 1810.7 414.0 C1810.9 418.3 1813.8 421.9 1815.0 427.0 C1816.2 432.1 1817.1 438.0 1818.0 444.6 C1818.9 451.2 1819.9 459.8 1820.5 466.4 C1821.1 473.0 1821.6 477.4 1821.6 484.0 C1821.6 490.6 1820.5 497.7 1820.5 505.7 C1820.5 513.7 1821.6 521.9 1821.6 531.8 C1821.6 541.7 1821.1 558.0 1820.5 565.0 C1819.9 572.0 1818.5 568.4 1817.8 574.0 C1817.1 579.6 1817.0 590.3 1816.6 598.4 C1816.2 606.5 1815.5 614.6 1815.4 622.7 C1815.3 630.8 1816.0 639.8 1816.0 647.0 C1816.0 654.2 1815.9 658.0 1815.4 666.0 C1814.9 674.0 1814.0 686.1 1813.0 695.0 C1812.0 703.9 1810.4 711.4 1809.4 719.5 C1808.4 727.6 1807.8 735.7 1807.0 743.8 C1806.2 751.9 1805.0 762.0 1804.5 768.0 C1804.0 774.0 1803.8 774.2 1803.7 780.0 C1803.6 785.8 1804.1 793.3 1804.0 803.0 C1803.9 812.7 1803.3 828.3 1803.0 838.0 C1802.7 847.7 1802.5 853.6 1801.9 861.4 C1801.3 869.2 1800.5 876.9 1799.5 884.7 C1798.5 892.5 1797.6 900.3 1796.0 908.0 C1794.4 915.7 1792.2 923.7 1790.0 931.0 C1787.8 938.3 1785.7 945.8 1783.0 952.0 C1780.3 958.2 1777.5 963.7 1774.0 968.4 C1770.5 973.1 1766.7 976.5 1762.0 980.0 C1757.3 983.5 1751.8 987.0 1746.0 989.3 C1740.2 991.6 1732.8 993.0 1727.4 994.0 C1722.0 995.0 1718.2 995.4 1713.5 995.0 C1708.8 994.6 1704.6 993.3 1699.5 991.6 C1694.4 989.9 1688.1 987.0 1683.0 984.7 C1677.9 982.4 1674.0 979.7 1669.0 977.7 C1664.0 975.8 1659.5 974.5 1653.0 973.0 C1646.5 971.5 1637.5 969.6 1629.8 968.4 C1622.0 967.2 1614.3 966.8 1606.5 966.0 C1598.7 965.2 1590.8 964.3 1583.0 963.7 C1575.2 963.1 1567.8 962.9 1560.0 962.6 C1552.2 962.3 1547.3 962.1 1536.0 961.8 C1524.7 961.5 1506.7 961.0 1492.0 961.0 C1477.3 961.0 1462.6 961.1 1448.0 961.8 C1433.4 962.5 1419.1 963.7 1404.6 965.0 C1390.1 966.3 1375.4 967.9 1360.8 969.7 C1346.2 971.5 1330.5 974.0 1317.0 976.0 C1303.5 978.0 1286.0 981.0 1279.8 982.0 C1279.1 982.1 1278.7 983.4 1275.4 982.8 C1272.1 982.2 1265.5 982.0 1260.0 978.4 C1254.5 974.8 1248.1 970.5 1242.6 961.0 C1237.1 951.5 1230.8 935.4 1227.0 921.5 C1223.2 907.6 1221.0 893.8 1219.8 877.7 C1218.6 861.6 1218.6 844.0 1219.8 825.0 C1221.0 806.0 1224.0 781.5 1227.0 764.0 C1230.0 746.5 1233.2 730.7 1238.0 720.0 C1242.8 709.3 1249.2 704.5 1255.7 700.0 C1262.2 695.5 1273.2 694.4 1276.7 693.3 Z" fill="none" stroke="#3b322c" stroke-width="0.8" opacity="0.6"/>
<path d="M1627.4 318.0 L1652.0 318.0" fill="none" stroke="#4583bd" stroke-width="1.6"/>
<path d="M1764.0 197.4 L1764.0 236.0" fill="none" stroke="#4583bd" stroke-width="1.6"/>
<path d="M1580.0 441.8 L1611.0 441.8" fill="none" stroke="#4583bd" stroke-width="1.6"/>
<path d="M1781.0 391.9 L1837.0 391.9" fill="none" stroke="#4583bd" stroke-width="1.6"/>
<path d="M1819.4 365.7 L1826.0 365.7" fill="none" stroke="#4583bd" stroke-width="1.6"/>
<path d="M1825.5 423.0 L1826.3 700.0 L1827.0 989.0" fill="none" stroke="#4583bd" stroke-width="1.6"/>
<path d="M1830.0 484.0 L1830.4 700.0 L1831.0 989.0" fill="none" stroke="#4583bd" stroke-width="1.6"/>
<path d="M1506.0 602.0 L1553.0 602.0" fill="none" stroke="#4583bd" stroke-width="1.6"/>
<path d="M1506.0 603.5 L1553.0 603.5" fill="none" stroke="#4583bd" stroke-width="1.6"/>
<path d="M1819.0 588.0 L1827.0 588.0" fill="none" stroke="#4583bd" stroke-width="1.6"/>
<path d="M1819.0 649.0 L1827.0 649.0" fill="none" stroke="#4583bd" stroke-width="1.6"/>
<path d="M1810.6 710.0 L1810.0 803.0 L1810.0 991.6" fill="none" stroke="#4583bd" stroke-width="1.6"/>
<path d="M1812.3 803.0 L1812.3 991.6" fill="none" stroke="#4583bd" stroke-width="1.6"/>
<path d="M1827.5 673.5 L1828.0 989.0" fill="none" stroke="#4583bd" stroke-width="1.6"/>
<path d="M1647.0 797.0 L1760.0 798.0 L1838.0 801.0" fill="none" stroke="#4583bd" stroke-width="1.6"/>
<path d="M1671.6 817.0 L1760.0 818.0 L1838.0 820.0" fill="none" stroke="#4583bd" stroke-width="1.6"/>
<path d="M1800.7 885.8 L1810.0 884.0" fill="none" stroke="#4583bd" stroke-width="1.6"/>
<path d="M1804.0 791.6 L1810.0 791.6" fill="none" stroke="#4583bd" stroke-width="1.6"/>
<path d="M1700.7 995.0 L1700.7 1003.7" fill="none" stroke="#4583bd" stroke-width="1.6"/>
<path d="M1729.0 995.0 L1729.0 1001.0" fill="none" stroke="#4583bd" stroke-width="1.6"/>
<path d="M1766.5 977.7 L1766.5 996.6" fill="none" stroke="#4583bd" stroke-width="1.6"/>
<path d="M1276.7 693.3 C1279.4 694.4 1288.3 696.1 1293.0 700.0 C1297.7 703.9 1301.7 710.0 1305.0 716.7 C1308.3 723.4 1309.5 727.8 1313.0 740.0 C1316.5 752.2 1322.8 774.3 1325.8 790.0 C1328.8 805.7 1331.0 817.9 1331.0 834.0 C1331.0 850.1 1328.9 870.5 1325.8 886.5 C1322.7 902.5 1317.7 916.9 1312.6 930.0 C1307.5 943.1 1300.5 956.3 1295.0 965.0 C1289.5 973.7 1282.3 979.2 1279.8 982.0" fill="none" stroke="#f3850a" stroke-width="3.5" stroke-linecap="round" stroke-linejoin="round"/>
<path d="M1433.0 686.0 C1435.5 686.7 1443.5 686.5 1448.0 690.0 C1452.5 693.5 1456.3 698.9 1460.0 706.7 C1463.7 714.5 1467.6 728.7 1470.0 736.7 C1472.4 744.8 1472.0 741.7 1474.6 755.0 C1477.2 768.3 1484.5 794.5 1485.6 816.4 C1486.7 838.3 1483.6 867.6 1481.0 886.5 C1478.4 905.4 1474.0 917.6 1470.0 930.0 C1466.0 942.4 1459.2 955.8 1457.0 961.0" fill="none" stroke="#f3850a" stroke-width="3.5" stroke-linecap="round" stroke-linejoin="round"/>
<path d="M1610.0 429.4 C1610.3 430.7 1609.4 434.8 1612.0 437.0 C1614.6 439.2 1617.7 439.6 1625.4 442.5 C1633.1 445.4 1645.3 450.5 1658.0 454.5 C1670.7 458.5 1688.2 462.8 1701.7 466.4 C1715.2 470.0 1729.8 473.8 1738.8 476.3 C1747.8 478.9 1749.5 480.6 1756.0 481.7 C1762.5 482.8 1769.7 482.2 1778.0 482.8 C1786.3 483.4 1798.4 484.8 1806.0 485.0 C1813.6 485.2 1820.8 484.2 1823.8 484.0" fill="none" stroke="#f3850a" stroke-width="3.5" stroke-linecap="round" stroke-linejoin="round"/>
<path d="M1583.0 529.7 C1582.8 528.2 1581.0 523.5 1581.8 521.0 C1582.6 518.5 1584.4 515.6 1588.0 514.4 C1591.6 513.2 1596.6 512.9 1603.6 514.0 C1610.6 515.1 1625.1 519.2 1629.8 521.0 C1634.5 522.8 1627.3 522.5 1632.0 525.0 C1636.7 527.5 1648.2 531.2 1658.0 536.0 C1667.8 540.8 1680.1 547.6 1690.8 553.6 C1701.5 559.6 1712.7 567.1 1722.0 571.8 C1731.3 576.4 1737.1 576.5 1746.4 581.5 C1755.7 586.5 1769.9 596.4 1778.0 602.0 C1786.1 607.6 1789.6 609.9 1794.8 615.4 C1800.0 620.9 1805.9 629.1 1809.4 634.8 C1812.9 640.4 1814.9 646.9 1816.0 649.3" fill="none" stroke="#f3850a" stroke-width="3.5" stroke-linecap="round" stroke-linejoin="round"/>
<path d="M1551.4 613.0 C1552.0 610.6 1553.2 601.8 1555.0 598.4 C1556.8 595.0 1558.6 593.2 1562.3 592.4 C1566.0 591.6 1566.4 591.6 1576.9 593.6 C1587.4 595.6 1603.1 599.6 1625.3 604.5 C1647.5 609.4 1695.5 618.9 1710.0 622.7 C1724.5 626.5 1704.4 625.5 1712.5 627.5 C1720.6 629.5 1746.0 632.4 1758.5 634.8 C1771.0 637.2 1778.1 638.8 1787.6 642.0 C1797.1 645.2 1810.8 651.2 1815.4 654.0 C1820.0 656.8 1815.4 658.2 1815.4 659.0" fill="none" stroke="#f3850a" stroke-width="3.5" stroke-linecap="round" stroke-linejoin="round"/>
<path d="M1573.0 594.8 C1575.7 597.4 1581.5 603.5 1589.0 610.5 C1596.5 617.5 1607.9 626.9 1618.0 637.0 C1628.1 647.1 1640.2 659.3 1649.5 671.0 C1658.8 682.7 1667.2 695.7 1673.7 707.4 C1680.2 719.1 1684.2 732.8 1688.3 741.3 C1692.3 749.8 1694.2 751.8 1698.0 758.3 C1701.8 764.8 1706.9 771.4 1711.0 780.0 C1715.1 788.6 1717.7 799.2 1722.8 810.0 C1727.9 820.8 1735.6 834.5 1741.4 845.0 C1747.2 855.5 1753.1 864.5 1757.7 873.0 C1762.3 881.5 1766.0 887.5 1769.0 896.0 C1772.0 904.5 1774.6 915.4 1776.0 924.0 C1777.4 932.6 1777.7 940.4 1777.4 947.4 C1777.1 954.4 1775.7 961.0 1774.0 966.0 C1772.3 971.0 1768.2 975.8 1767.0 977.7" fill="none" stroke="#f3850a" stroke-width="3.5" stroke-linecap="round" stroke-linejoin="round"/>
<path d="M1501.8 661.4 C1503.8 660.2 1509.4 653.6 1514.0 654.0 C1518.6 654.4 1523.1 659.3 1529.6 663.8 C1536.0 668.3 1542.8 672.7 1552.7 680.8 C1562.6 688.9 1576.9 701.8 1589.0 712.3 C1601.1 722.8 1615.2 733.7 1625.3 743.8 C1635.4 753.9 1644.1 766.8 1649.5 772.8 C1654.9 778.8 1652.5 773.0 1657.7 780.0 C1663.0 787.0 1672.5 802.6 1681.0 815.0 C1689.5 827.4 1699.5 842.1 1708.8 854.4 C1718.1 866.7 1728.2 877.7 1736.7 889.0 C1745.2 900.3 1754.2 912.3 1760.0 922.0 C1765.8 931.7 1769.5 940.1 1771.6 947.4 C1773.7 954.7 1772.6 962.9 1772.8 966.0" fill="none" stroke="#f3850a" stroke-width="3.5" stroke-linecap="round" stroke-linejoin="round"/>
<path d="M1514.0 654.0 C1517.6 656.0 1529.7 658.3 1535.7 666.0 C1541.7 673.7 1545.2 687.0 1550.0 700.0 C1554.8 713.0 1560.7 730.5 1564.8 743.8 C1568.9 757.1 1572.6 768.1 1574.5 780.0 C1576.4 791.9 1576.5 803.4 1576.0 815.0 C1575.5 826.6 1574.3 838.2 1571.6 849.8 C1568.9 861.4 1563.0 875.0 1560.0 884.7 C1557.0 894.4 1556.0 896.8 1553.5 908.0 C1551.0 919.2 1547.6 942.8 1544.7 952.0 C1541.8 961.2 1537.5 961.2 1536.0 963.0" fill="none" stroke="#f3850a" stroke-width="3.5" stroke-linecap="round" stroke-linejoin="round"/>
<path d="M1824.6 365.2 L1828.6 365.2 L1830 430 L1832.2 485.5 L1827.2 485.5 L1825 430 Z" fill="#000"/>
<path d="M1837 307 L1836 360 L1833.6 423 L1831 470" fill="none" stroke="#000" stroke-width="3" stroke-dasharray="3.2 4.6"/>
<path d="M1361 989 L1758.8 996" stroke="#000" stroke-width="1.5"/>
<circle cx="1652.5" cy="314" r="5.5" fill="#10f010"/>
<circle cx="1613" cy="437" r="5" fill="#10f010"/>
<circle cx="1558.7" cy="595.3" r="5.5" fill="#10f010"/>
<circle cx="1804.6" cy="351" r="5.5" fill="#10f010"/>
<circle cx="1798" cy="364.6" r="5.5" fill="#10f010"/>
<circle cx="1680" cy="377.5" r="5.5" fill="#10f010"/>
<circle cx="1766.7" cy="393" r="5.5" fill="#10f010"/>
<circle cx="1807" cy="485.6" r="6" fill="#10f010"/>
<circle cx="1830" cy="389" r="2.5" fill="#10f010"/>
<circle cx="1530.4" cy="664.3" r="5.5" fill="#10f010"/>
<circle cx="1624.8" cy="713.5" r="5.5" fill="#10f010"/>
<circle cx="1794.8" cy="685" r="5.5" fill="#10f010"/>
<circle cx="1618.8" cy="800.5" r="5.5" fill="#10f010"/>
<circle cx="1638.6" cy="821" r="5.5" fill="#10f010"/>
<circle cx="1764" cy="883.5" r="5.5" fill="#10f010"/>
</g>
</svg>

<!-- L / R badges and small icons -->
<div class="lr" style="left:17px;top:116px"><span class="abs" style="left:14px;top:9px">L</span></div>
<div class="lr" style="left:1860px;top:116px"><span class="abs" style="left:10px;top:9px">R</span></div>

<!-- expand icons -->
<svg class="abs" style="left:101px;top:119px" width="35" height="35" viewBox="0 0 35 35" fill="none" stroke="#45aed0" stroke-width="1.5" stroke-linecap="round" stroke-linejoin="round">
<path d="M3.2 10.5 L3.2 3.2 L10.5 3.2 M3.2 3.2 L12.5 12.5"/>
<path d="M24 3.2 L31.3 3.2 L31.3 10.5 M31.3 3.2 L22 12.5"/>
<path d="M3.2 24 L3.2 31.3 L10.5 31.3 M3.2 31.3 L12.5 22"/>
<path d="M24 31.3 L31.3 31.3 L31.3 24 M31.3 31.3 L22 22"/>
</svg>
<svg class="abs" style="left:1785px;top:119px" width="35" height="35" viewBox="0 0 35 35" fill="none" stroke="#45aed0" stroke-width="1.5" stroke-linecap="round" stroke-linejoin="round">
<path d="M3.2 10.5 L3.2 3.2 L10.5 3.2 M3.2 3.2 L12.5 12.5"/>
<path d="M24 3.2 L31.3 3.2 L31.3 10.5 M31.3 3.2 L22 12.5"/>
<path d="M3.2 24 L3.2 31.3 L10.5 31.3 M3.2 31.3 L12.5 22"/>
<path d="M24 31.3 L31.3 31.3 L31.3 24 M31.3 31.3 L22 22"/>
</svg>
<!-- scissors + rotate (left) -->
<svg class="abs" style="left:15px;top:167px" width="50" height="22" viewBox="0 0 50 22" fill="none" stroke="#3f66b5" stroke-width="1.9" stroke-linecap="round" stroke-linejoin="round">
<circle cx="5.35" cy="5.9" r="2.6"/><circle cx="9.25" cy="15.2" r="2.6"/>
<path d="M7.4 7.6 L9.6 9.2 M8.6 10.2 L9.6 13" stroke-width="2"/>
<path d="M9.2 8 L14.6 2.6 L18 2.4 L14.6 7.4 L20 7.5 L20.3 9 L19 10.6 L9.6 10.9 Z" fill="#3f66b5" stroke-width="1"/>
<path d="M33.7 3.6 C27.3 5.6 26.2 12.6 30.6 16.2"/>
<path d="M28.2 17.3 L32.8 13.2 L32.8 18 Z" fill="#3f66b5" stroke-width="0.6"/>
<path d="M36.4 18 C42.7 16 43.8 9 39.6 5.4"/>
<path d="M37 3.9 L42 4.2 L37.2 8.7 Z" fill="#3f66b5" stroke-width="0.6"/>
</svg>
<svg class="abs" style="left:1859px;top:167px" width="50" height="22" viewBox="0 0 50 22" fill="none" stroke="#3f66b5" stroke-width="1.9" stroke-linecap="round" stroke-linejoin="round">
<circle cx="5.35" cy="5.9" r="2.6"/><circle cx="9.25" cy="15.2" r="2.6"/>
<path d="M7.4 7.6 L9.6 9.2 M8.6 10.2 L9.6 13" stroke-width="2"/>
<path d="M9.2 8 L14.6 2.6 L18 2.4 L14.6 7.4 L20 7.5 L20.3 9 L19 10.6 L9.6 10.9 Z" fill="#3f66b5" stroke-width="1"/>
<path d="M33.7 3.6 C27.3 5.6 26.2 12.6 30.6 16.2"/>
<path d="M28.2 17.3 L32.8 13.2 L32.8 18 Z" fill="#3f66b5" stroke-width="0.6"/>
<path d="M36.4 18 C42.7 16 43.8 9 39.6 5.4"/>
<path d="M37 3.9 L42 4.2 L37.2 8.7 Z" fill="#3f66b5" stroke-width="0.6"/>
</svg>
<!-- center toolbar icons -->
<svg class="abs" style="left:855px;top:115px" width="215" height="45" viewBox="0 0 215 45" fill="none" stroke="#43aacb" stroke-width="1.4" stroke-linecap="round" stroke-linejoin="round">
<!-- eye: x 862..896, y 126.6..145 => local x 7..41, y 11.6..30 -->
<path d="M7 20.8 C13 13.5 19 11.8 24 11.8 C29 11.8 35 13.5 41 20.8 C35 27.5 29 29.8 24 29.8 C19 29.8 13 27.5 7 20.8 Z"/>
<circle cx="24.2" cy="19.8" r="8"/>
<circle cx="24.2" cy="18.5" r="3.6" fill="#43aacb" stroke="none"/>
<!-- layers: x 918..948 -> 63..93 ; y 123..149.5 -> 8..34.5 -->
<path d="M63 29 L78 23 L93 29 L78 34.5 Z" fill="#cbd7dd" stroke="none"/>
<path d="M63 22.5 L78 16 L93 22.5 L78 29 Z" fill="#ebaa7c" stroke="none"/>
<path d="M63 14.5 L78 8 L93 14.5 L78 21 Z" fill="#ff9852" stroke="none"/>
<!-- brush: x 970..1003.5 -> 115..148.5 ; y 121..154 -> 6..39 -->
<path d="M140.5 6 L131.5 21 M148 6 L138 26"/>
<path d="M131.5 21 C136 21.5 137.5 23.5 138 26 C139 32 133 37.5 124 38 L116 38.5 C121 34.5 121.5 31 123 27 C124.5 23.5 127.5 21 131.5 21 Z"/>
<!-- swap arrows: x 1023..1059 -> 168..204 ; y 126.6 -> 11.6 ; 145.5 -> 30.5 -->
<path d="M168.5 11.6 L203.5 11.6 M195.5 3.5 L203.5 11.6 L195.5 19.7"/>
<path d="M203.5 30.5 L168.5 30.5 M176.5 22.4 L168.5 30.5 L176.5 38.6"/>
</svg>


<!-- center panel -->
<div id="panel"></div>
<div id="taba"></div>
<div id="tabm"></div>
<div class="t" style="left:846px;top:169px;font-size:13px" id="tmeas">Measurement</div>
<div class="t" style="left:1011px;top:170px;font-size:13px;letter-spacing:-0.3px" id="tana">Analysis</div>

<div class="hd" style="left:857px;top:192px">Length</div>
<div class="hl" style="top:197px"></div>
<div class="hd" style="left:1036px;top:193px;letter-spacing:0.5px">mm</div>
<div class="row a" style="top:211px;line-height:24px"><span class="l">252.0</span><span class="c">Foot</span><span class="r">251.8</span></div>
<div class="row b" style="top:235px;line-height:24px"><span class="l">181.5</span><span class="c">Arch</span><span class="r">181.3</span></div>
<div class="row a" style="top:259px;line-height:24px"><span class="l">62.6</span><span class="c">Medial Malleolus</span><span class="r">63.0</span></div>
<div class="row b" style="top:283px;line-height:24px"><span class="l">59.5</span><span class="c">Lateral Malleolus</span><span class="r">59.2</span></div>
<div class="row a" style="top:307px;line-height:24px"><span class="l">158.7</span><span class="c">Fibulare Instep</span><span class="r">158.5</span></div>
<div class="row b" style="top:331px;line-height:24px"><span class="l">180.9</span><span class="c">1 Met to Pternion</span><span class="r">181.6</span></div>
<div class="row a" style="top:355px;line-height:24px"><span class="l">158.7</span><span class="c">5 Met to Pternion</span><span class="r">158.9</span></div>
<div class="row b" style="top:379px;line-height:24px"><span class="l">32.3</span><span class="c">HC to Pternion</span><span class="r">33.1</span></div>
<div class="row a" style="top:403px;line-height:24px"><span class="l">96.1</span><span class="c">Lat Arch to Pternion</span><span class="r">96.4</span></div>
<div class="row b" style="top:427px;line-height:24px"><span class="l">107.3</span><span class="c">Med Arch to Pternion</span><span class="r">107.5</span></div>
<div class="row a" style="top:451px;line-height:24px"><span class="l">219.8</span><span class="c">Toe 1 Med to Pternior</span><span class="r">222.4</span></div>
<div class="row b" style="top:475px;line-height:24px"><span class="l">191.6</span><span class="c">Toe 5 Lat to Pternion</span><span class="r">196.7</span></div>
<div class="row a" style="top:499px;line-height:24px"><span class="l">106.6</span><span class="c">Waist Point to Pternio</span><span class="r">106.5</span></div>
<div class="hd" style="left:863px;top:544px">Girth</div>
<div class="hl" style="top:549px"></div>
<div class="hd" style="left:1036px;top:545px;letter-spacing:0.5px">mm</div>
<div class="row a" style="top:563px;line-height:26px"><span class="l">244.7</span><span class="c">Ball</span><span class="r">250.7</span></div>
<div class="row b" style="top:587px;line-height:26px"><span class="l">247.0</span><span class="c">Instep</span><span class="r">252.5</span></div>
<div class="row a" style="top:611px;line-height:26px"><span class="l">343.0</span><span class="c">Long Heel</span><span class="r">344.8</span></div>
<div class="row b" style="top:635px;line-height:26px"><span class="l">327.5</span><span class="c">Short Heel</span><span class="r">326.8</span></div>
<div class="row a" style="top:659px;line-height:26px"><span class="l">253.0</span><span class="c">Ankle</span><span class="r">253.9</span></div>
<div class="row b" style="top:683px;line-height:26px"><span class="l">252.8</span><span class="c">Waist</span><span class="r">260.7</span></div>
<div class="row a" style="top:707px;line-height:26px"><span class="l">225.6</span><span class="c">Leg Girth 1</span><span class="r">230.7</span></div>
<div class="row b" style="top:731px;line-height:26px"><span class="l">258.4</span><span class="c">Leg Girth 2</span><span class="r">263.2</span></div>
<div class="row a" style="top:755px;line-height:26px"><span class="l"></span><span class="c">Leg Girth 3</span><span class="r"></span></div>
<div class="hd" style="left:859px;top:800px">Width</div>
<div class="hl" style="top:805px"></div>
<div class="hd" style="left:1036px;top:801px;letter-spacing:0.5px">mm</div>
<div class="row a" style="top:819px;line-height:26px"><span class="l">103.4</span><span class="c">ForeFoot</span><span class="r">104.7</span></div>
<div class="row b" style="top:843px;line-height:26px"><span class="l">67.4</span><span class="c">Heel</span><span class="r">69.8</span></div>
<div class="row a" style="top:867px;line-height:26px"><span class="l">70.7</span><span class="c">Bimalleolar</span><span class="r">73.0</span></div>
<div class="row b" style="top:891px;line-height:26px"><span class="l">94.5</span><span class="c">Mid-Foot</span><span class="r">95.8</span></div>
<div class="row a" style="top:915px;line-height:26px"><span class="l">69.3</span><span class="c">1-5 Met</span><span class="r">69.4</span></div>
<div class="row b" style="top:939px;line-height:26px"><span class="l">50.1</span><span class="c">Toe 1 Inside</span><span class="r">51.0</span></div>
<div class="row a" style="top:963px;line-height:26px"><span class="l">50.0</span><span class="c">Toe 5 Outside</span><span class="r">48.3</span></div>
<div class="row b" style="top:987px;line-height:26px"><span class="l">50.4</span><span class="c">Metatarsale Tibiale</span><span class="r">51.1</span></div>
<div class="row a" style="top:1011px;height:3px"></div>
<svg class="abs" style="left:1092px;top:194px" width="10" height="8" viewBox="0 0 10 8"><path d="M1.5 5.5 L5 2 L8.5 5.5 Z" fill="#606060"/></svg>
<svg class="abs" style="left:1092px;top:1000px" width="10" height="8" viewBox="0 0 10 8"><path d="M1.5 2.5 L8.5 2.5 L5 6 Z" fill="#606060"/></svg>

</body>
</html>
